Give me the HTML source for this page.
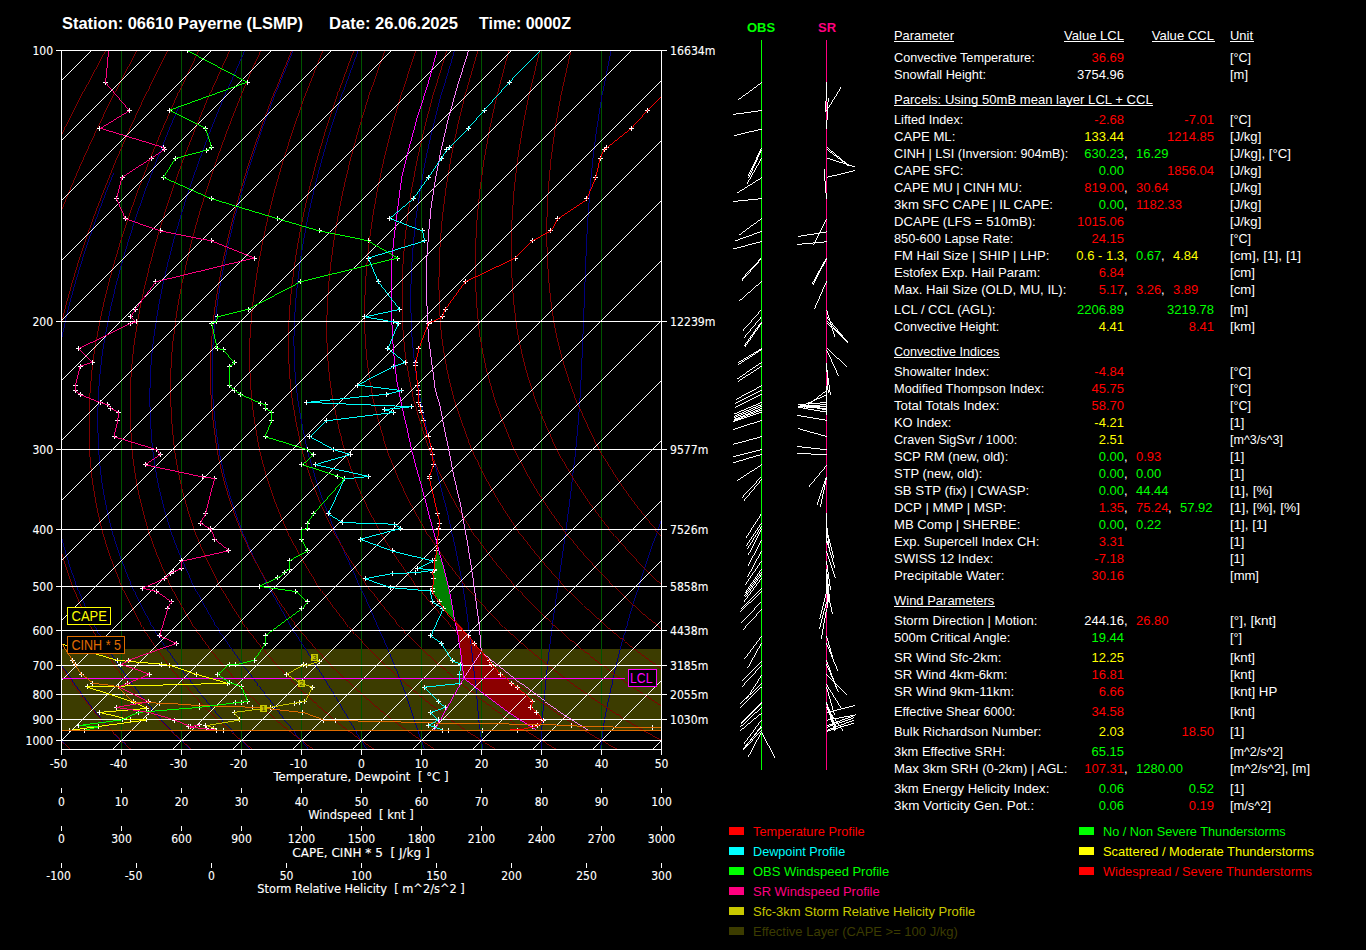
<!DOCTYPE html>
<html lang="en"><head><meta charset="utf-8"><title>Sounding 06610 Payerne</title>
<style>html,body{margin:0;padding:0;background:#000;overflow:hidden}svg{display:block}text{white-space:pre}.ce{shape-rendering:crispEdges;fill:none;stroke-width:1}</style></head><body>
<svg width="1366" height="950" viewBox="0 0 1366 950" font-family="'Liberation Sans', sans-serif" font-size="13" fill="#fff">
<rect width="1366" height="950" fill="#000"/>
<clipPath id="cp"><rect x="61" y="50" width="601" height="699"/></clipPath>
<g class="ce" clip-path="url(#cp)">
<rect x="61" y="649" width="601" height="81" style="fill:#3c3c00" stroke="none"/>
<path style="fill:#8c0000" stroke="none" d="M455.3 620.0L458.2 636.2L461.3 657.3L463.8 678.1L483.1 693.4L508.0 712.1L534.0 728.5L532.9 726.8L537.9 725.8L543.5 720.2L536.4 712.7L531.0 707.4L532.9 701.8L517.3 687.2L511.1 683.5L500.5 674.4L491.8 664.4L489.1 660.4L474.2 643.3L468.8 635.8Z"/>
<path stroke="#005400" d="M121.5 50V749M181.5 50V749M241.5 50V749M301.5 50V749M361.5 50V749M421.5 50V749M481.5 50V749M541.5 50V749M601.5 50V749"/>
<path stroke="#000081" stroke-width=".99" d="M70.6 750.0L70.3 749.6L69.9 749.3L69.5 748.9L69.2 748.5L68.8 748.1L68.4 747.8L68.1 747.4L67.7 747.0L67.4 746.7L67.0 746.3L66.6 745.9L66.3 745.5L65.9 745.1L65.5 744.8L65.2 744.4L64.8 744.0L64.4 743.6L64.1 743.2L63.7 742.8L63.3 742.5L63.0 742.1L62.6 741.7L62.2 741.3L61.9 740.9L61.5 740.5L59.7 738.5L57.8 736.5L56.0 734.5L54.1 732.5L52.3 730.4L50.4 728.3L48.5 726.1L46.7 724.0L44.8 721.8L43.0 719.5L41.2 717.2L39.4 714.8L37.6 712.4L35.8 710.0L34.0 707.5L32.2 705.0L30.5 702.4L28.7 699.8L26.9 697.2L25.1 694.5L23.3 691.8L21.5 689.1L19.7 686.3L17.9 683.5L16.0 680.6L14.2 677.7L12.4 674.7L10.6 671.7L8.8 668.6L7.1 665.5L5.3 662.3L3.5 659.0L1.8 655.7L0.0 652.3L-1.7 648.9L-3.4 645.4L-5.1 641.8L-6.8 638.1L-8.5 634.3L-10.1 630.5L-11.7 626.6L-13.3 622.5L-14.9 618.4L-16.4 614.2L-17.9 609.8L-19.4 605.4L-20.8 600.8L-22.2 596.2L-23.6 591.4L-25.0 586.5L-26.3 581.5L-27.6 576.3L-28.8 571.1L-30.0 565.6L-31.2 560.1L-32.3 554.3L-33.3 548.4L-34.3 542.3L-35.2 536.0L-35.9 529.5L-36.6 522.8L-37.3 515.8L-37.8 508.6L-38.2 501.1L-38.5 493.4L-38.6 485.3L-38.6 477.0L-38.4 468.2L-38.1 459.1L-37.4 449.5L-36.6 439.5L-35.5 429.0L-34.2 418.1L-32.6 406.6L-30.7 394.5L-28.3 381.7L-25.5 368.1L-22.2 353.6L-18.2 338.2L-13.4 321.5L-7.8 303.6L-4.1 292.2M131.1 750.0L130.7 749.6L130.3 749.3L130.0 748.9L129.6 748.5L129.2 748.1L128.8 747.8L128.4 747.4L128.1 747.0L127.7 746.7L127.3 746.3L126.9 745.9L126.5 745.5L126.1 745.1L125.7 744.8L125.4 744.4L125.0 744.0L124.6 743.6L124.2 743.2L123.8 742.8L123.4 742.5L123.0 742.1L122.7 741.7L122.3 741.3L121.9 740.9L121.5 740.5L119.6 738.5L117.6 736.5L115.6 734.5L113.7 732.5L111.7 730.4L109.7 728.3L107.7 726.1L105.7 724.0L103.7 721.8L101.8 719.5L99.8 717.2L97.8 714.8L95.9 712.4L94.0 710.0L92.0 707.5L90.1 705.0L88.1 702.4L86.2 699.8L84.2 697.2L82.2 694.5L80.3 691.8L78.3 689.1L76.3 686.3L74.3 683.5L72.2 680.6L70.2 677.7L68.2 674.7L66.2 671.7L64.2 668.6L62.2 665.5L60.3 662.3L58.3 659.0L56.3 655.7L54.3 652.3L52.4 648.9L50.4 645.4L48.5 641.8L46.5 638.1L44.6 634.3L42.8 630.5L40.9 626.6L39.1 622.5L37.3 618.4L35.5 614.2L33.7 609.8L32.0 605.4L30.2 600.8L28.6 596.2L26.9 591.4L25.3 586.5L23.7 581.5L22.1 576.3L20.5 571.1L19.0 565.6L17.6 560.1L16.1 554.3L14.8 548.4L13.5 542.3L12.3 536.0L11.2 529.5L10.2 522.8L9.2 515.8L8.3 508.6L7.5 501.1L6.9 493.4L6.4 485.3L6.0 477.0L5.8 468.2L5.8 459.1L6.0 449.5L6.4 439.5L7.1 429.0L7.9 418.1L9.1 406.6L10.5 394.5L12.4 381.7L14.7 368.1L17.5 353.6L21.0 338.2L25.2 321.5L30.3 303.6L36.1 284.4L42.9 263.6L50.9 241.2L54.4 231.7M191.2 750.0L190.8 749.6L190.4 749.3L190.0 748.9L189.6 748.5L189.3 748.1L188.9 747.8L188.5 747.4L188.1 747.0L187.7 746.7L187.3 746.3L186.9 745.9L186.6 745.5L186.2 745.1L185.8 744.8L185.4 744.4L185.0 744.0L184.6 743.6L184.2 743.2L183.8 742.8L183.5 742.5L183.1 742.1L182.7 741.7L182.3 741.3L181.9 740.9L181.5 740.5L179.5 738.5L177.5 736.5L175.5 734.5L173.5 732.5L171.5 730.4L169.4 728.3L167.4 726.1L165.3 724.0L163.3 721.8L161.2 719.5L159.2 717.2L157.1 714.8L155.1 712.4L153.0 710.0L151.0 707.5L148.9 705.0L146.9 702.4L144.8 699.8L142.7 697.2L140.6 694.5L138.4 691.8L136.3 689.1L134.1 686.3L132.0 683.5L129.8 680.6L127.6 677.7L125.4 674.7L123.3 671.7L121.1 668.6L118.9 665.5L116.7 662.3L114.5 659.0L112.3 655.7L110.2 652.3L108.0 648.9L105.8 645.4L103.7 641.8L101.5 638.1L99.4 634.3L97.2 630.5L95.1 626.6L93.0 622.5L91.0 618.4L88.9 614.2L86.9 609.8L84.9 605.4L82.9 600.8L80.9 596.2L79.0 591.4L77.1 586.5L75.2 581.5L73.3 576.3L71.5 571.1L69.6 565.6L67.9 560.1L66.1 554.3L64.5 548.4L62.8 542.3L61.3 536.0L59.8 529.5L58.4 522.8L57.1 515.8L55.9 508.6L54.7 501.1L53.7 493.4L52.8 485.3L52.0 477.0L51.4 468.2L51.0 459.1L50.8 449.5L50.8 439.5L51.0 429.0L51.4 418.1L52.1 406.6L53.1 394.5L54.4 381.7L56.2 368.1L58.5 353.6L61.5 338.2L65.1 321.5L69.6 303.6L74.8 284.4L81.0 263.6L88.3 241.2L96.9 216.8L106.9 190.1L113.8 172.8M250.5 750.0L250.2 749.6L249.8 749.3L249.5 748.9L249.1 748.5L248.8 748.1L248.4 747.8L248.1 747.4L247.7 747.0L247.3 746.7L247.0 746.3L246.6 745.9L246.3 745.5L245.9 745.1L245.5 744.8L245.2 744.4L244.8 744.0L244.4 743.6L244.1 743.2L243.7 742.8L243.3 742.5L243.0 742.1L242.6 741.7L242.2 741.3L241.9 740.9L241.5 740.5L239.6 738.5L237.8 736.5L235.8 734.5L233.9 732.5L232.0 730.4L230.0 728.3L228.0 726.1L226.0 724.0L224.0 721.8L222.0 719.5L219.9 717.2L217.9 714.8L215.9 712.4L213.8 710.0L211.8 707.5L209.7 705.0L207.6 702.4L205.5 699.8L203.4 697.2L201.2 694.5L199.0 691.8L196.8 689.1L194.6 686.3L192.3 683.5L190.1 680.6L187.8 677.7L185.5 674.7L183.2 671.7L180.9 668.6L178.6 665.5L176.2 662.3L173.9 659.0L171.6 655.7L169.2 652.3L166.8 648.9L164.5 645.4L162.1 641.8L159.8 638.1L157.4 634.3L155.1 630.5L152.7 626.6L150.4 622.5L148.1 618.4L145.8 614.2L143.5 609.8L141.3 605.4L139.0 600.8L136.8 596.2L134.5 591.4L132.3 586.5L130.1 581.5L127.9 576.3L125.8 571.1L123.7 565.6L121.5 560.1L119.5 554.3L117.5 548.4L115.5 542.3L113.6 536.0L111.8 529.5L110.0 522.8L108.3 515.8L106.7 508.6L105.2 501.1L103.7 493.4L102.4 485.3L101.2 477.0L100.2 468.2L99.3 459.1L98.7 449.5L98.2 439.5L97.9 429.0L97.9 418.1L98.0 406.6L98.5 394.5L99.3 381.7L100.6 368.1L102.3 353.6L104.7 338.2L107.8 321.5L111.6 303.6L116.2 284.4L121.7 263.6L128.3 241.2L136.1 216.8L145.4 190.1L156.5 160.7L169.7 128.1L178.9 106.7M309.1 750.0L308.8 749.6L308.5 749.3L308.2 748.9L307.9 748.5L307.6 748.1L307.3 747.8L307.0 747.4L306.7 747.0L306.4 746.7L306.1 746.3L305.8 745.9L305.5 745.5L305.2 745.1L304.9 744.8L304.6 744.4L304.3 744.0L304.0 743.6L303.7 743.2L303.4 742.8L303.1 742.5L302.8 742.1L302.4 741.7L302.1 741.3L301.8 740.9L301.5 740.5L299.9 738.5L298.3 736.5L296.7 734.5L295.0 732.5L293.3 730.4L291.6 728.3L289.9 726.1L288.1 724.0L286.3 721.8L284.5 719.5L282.7 717.2L280.9 714.8L279.1 712.4L277.2 710.0L275.4 707.5L273.5 705.0L271.5 702.4L269.6 699.8L267.6 697.2L265.6 694.5L263.5 691.8L261.4 689.1L259.3 686.3L257.1 683.5L254.9 680.6L252.7 677.7L250.4 674.7L248.2 671.7L245.9 668.6L243.6 665.5L241.2 662.3L238.9 659.0L236.5 655.7L234.1 652.3L231.6 648.9L229.2 645.4L226.7 641.8L224.3 638.1L221.8 634.3L219.3 630.5L216.8 626.6L214.3 622.5L211.8 618.4L209.3 614.2L206.8 609.8L204.3 605.4L201.8 600.8L199.4 596.2L196.9 591.4L194.4 586.5L191.9 581.5L189.4 576.3L186.9 571.1L184.5 565.6L182.0 560.1L179.6 554.3L177.3 548.4L174.9 542.3L172.6 536.0L170.4 529.5L168.3 522.8L166.2 515.8L164.1 508.6L162.2 501.1L160.3 493.4L158.5 485.3L156.8 477.0L155.3 468.2L154.0 459.1L152.8 449.5L151.8 439.5L151.0 429.0L150.4 418.1L150.0 406.6L149.9 394.5L150.1 381.7L150.8 368.1L151.9 353.6L153.6 338.2L156.0 321.5L159.1 303.6L163.0 284.4L167.7 263.6L173.5 241.2L180.5 216.8L188.9 190.1L199.1 160.7L211.4 128.1L226.3 91.6L244.4 50.5M367.0 750.0L366.8 749.6L366.6 749.3L366.4 748.9L366.2 748.5L366.0 748.1L365.7 747.8L365.5 747.4L365.3 747.0L365.1 746.7L364.9 746.3L364.6 745.9L364.4 745.5L364.2 745.1L364.0 744.8L363.8 744.4L363.5 744.0L363.3 743.6L363.1 743.2L362.9 742.8L362.6 742.5L362.4 742.1L362.2 741.7L362.0 741.3L361.7 740.9L361.5 740.5L360.3 738.5L359.2 736.5L358.0 734.5L356.7 732.5L355.5 730.4L354.2 728.3L352.9 726.1L351.6 724.0L350.2 721.8L348.9 719.5L347.5 717.2L346.2 714.8L344.8 712.4L343.4 710.0L342.0 707.5L340.5 705.0L339.0 702.4L337.5 699.8L335.9 697.2L334.3 694.5L332.7 691.8L331.0 689.1L329.2 686.3L327.5 683.5L325.6 680.6L323.8 677.7L321.9 674.7L319.9 671.7L318.0 668.6L316.0 665.5L313.9 662.3L311.9 659.0L309.7 655.7L307.6 652.3L305.4 648.9L303.1 645.4L300.8 641.8L298.5 638.1L296.2 634.3L293.8 630.5L291.4 626.6L289.0 622.5L286.5 618.4L284.0 614.2L281.5 609.8L279.0 605.4L276.4 600.8L273.8 596.2L271.2 591.4L268.6 586.5L265.9 581.5L263.2 576.3L260.5 571.1L257.8 565.6L255.1 560.1L252.4 554.3L249.7 548.4L247.0 542.3L244.4 536.0L241.7 529.5L239.2 522.8L236.6 515.8L234.1 508.6L231.7 501.1L229.3 493.4L227.0 485.3L224.8 477.0L222.7 468.2L220.8 459.1L219.0 449.5L217.4 439.5L216.0 429.0L214.7 418.1L213.6 406.6L212.8 394.5L212.3 381.7L212.2 368.1L212.5 353.6L213.4 338.2L215.0 321.5L217.3 303.6L220.3 284.4L224.1 263.6L228.9 241.2L234.9 216.8L242.3 190.1L251.3 160.7L262.4 128.1L276.0 91.6L292.8 50.5M424.8 750.0L424.6 749.6L424.5 749.3L424.4 748.9L424.3 748.5L424.1 748.1L424.0 747.8L423.9 747.4L423.7 747.0L423.6 746.7L423.5 746.3L423.4 745.9L423.2 745.5L423.1 745.1L423.0 744.8L422.8 744.4L422.7 744.0L422.6 743.6L422.4 743.2L422.3 742.8L422.2 742.5L422.0 742.1L421.9 741.7L421.8 741.3L421.6 740.9L421.5 740.5L420.8 738.5L420.1 736.5L419.4 734.5L418.7 732.5L417.9 730.4L417.2 728.3L416.4 726.1L415.7 724.0L414.9 721.8L414.1 719.5L413.3 717.2L412.5 714.8L411.8 712.4L411.0 710.0L410.1 707.5L409.3 705.0L408.5 702.4L407.6 699.8L406.7 697.2L405.8 694.5L404.8 691.8L403.8 689.1L402.8 686.3L401.7 683.5L400.6 680.6L399.4 677.7L398.3 674.7L397.1 671.7L395.8 668.6L394.6 665.5L393.3 662.3L392.0 659.0L390.6 655.7L389.2 652.3L387.7 648.9L386.2 645.4L384.6 641.8L383.0 638.1L381.4 634.3L379.7 630.5L378.0 626.6L376.2 622.5L374.4 618.4L372.5 614.2L370.6 609.8L368.6 605.4L366.6 600.8L364.5 596.2L362.3 591.4L360.1 586.5L357.8 581.5L355.4 576.3L353.0 571.1L350.5 565.6L347.9 560.1L345.3 554.3L342.6 548.4L340.0 542.3L337.2 536.0L334.5 529.5L331.7 522.8L329.0 515.8L326.2 508.6L323.3 501.1L320.5 493.4L317.8 485.3L315.1 477.0L312.4 468.2L309.9 459.1L307.5 449.5L305.1 439.5L302.9 429.0L300.9 418.1L298.9 406.6L297.2 394.5L295.8 381.7L294.7 368.1L294.1 353.6L293.9 338.2L294.4 321.5L295.5 303.6L297.3 284.4L299.9 263.6L303.4 241.2L308.0 216.8L314.0 190.1L321.5 160.7L331.0 128.1L342.9 91.6L357.9 50.5M482.8 750.0L482.7 749.6L482.7 749.3L482.6 748.9L482.6 748.5L482.5 748.1L482.5 747.8L482.4 747.4L482.4 747.0L482.3 746.7L482.3 746.3L482.2 745.9L482.2 745.5L482.1 745.1L482.1 744.8L482.0 744.4L482.0 744.0L481.9 743.6L481.9 743.2L481.8 742.8L481.8 742.5L481.7 742.1L481.7 741.7L481.6 741.3L481.6 740.9L481.5 740.5L481.2 738.5L481.0 736.5L480.7 734.5L480.4 732.5L480.2 730.4L479.9 728.3L479.6 726.1L479.3 724.0L479.1 721.8L478.8 719.5L478.6 717.2L478.4 714.8L478.1 712.4L477.9 710.0L477.7 707.5L477.5 705.0L477.3 702.4L477.1 699.8L476.8 697.2L476.6 694.5L476.3 691.8L476.0 689.1L475.7 686.3L475.4 683.5L475.1 680.6L474.8 677.7L474.5 674.7L474.1 671.7L473.8 668.6L473.4 665.5L473.1 662.3L472.7 659.0L472.3 655.7L471.9 652.3L471.5 648.9L471.0 645.4L470.6 641.8L470.1 638.1L469.6 634.3L469.1 630.5L468.6 626.6L468.1 622.5L467.6 618.4L467.0 614.2L466.4 609.8L465.8 605.4L465.1 600.8L464.4 596.2L463.7 591.4L462.9 586.5L462.0 581.5L461.1 576.3L460.1 571.1L459.0 565.6L457.9 560.1L456.7 554.3L455.5 548.4L454.1 542.3L452.7 536.0L451.3 529.5L449.7 522.8L448.1 515.8L446.3 508.6L444.4 501.1L442.4 493.4L440.4 485.3L438.2 477.0L436.0 468.2L433.8 459.1L431.5 449.5L429.2 439.5L426.8 429.0L424.3 418.1L421.9 406.6L419.6 394.5L417.3 381.7L415.3 368.1L413.5 353.6L412.1 338.2L411.2 321.5L410.8 303.6L411.0 284.4L411.9 263.6L413.5 241.2L416.2 216.8L420.1 190.1L425.4 160.7L432.6 128.1L442.0 91.6L454.3 50.5M541.3 750.0L541.3 749.6L541.3 749.3L541.3 748.9L541.3 748.5L541.3 748.1L541.3 747.8L541.3 747.4L541.4 747.0L541.4 746.7L541.4 746.3L541.4 745.9L541.4 745.5L541.4 745.1L541.4 744.8L541.4 744.4L541.4 744.0L541.4 743.6L541.4 743.2L541.4 742.8L541.4 742.5L541.5 742.1L541.5 741.7L541.5 741.3L541.5 740.9L541.5 740.5L541.6 738.5L541.6 736.5L541.7 734.5L541.7 732.5L541.8 730.4L541.9 728.3L542.0 726.1L542.1 724.0L542.2 721.8L542.3 719.5L542.5 717.2L542.7 714.8L542.9 712.4L543.1 710.0L543.3 707.5L543.6 705.0L543.8 702.4L544.1 699.8L544.3 697.2L544.6 694.5L544.9 691.8L545.1 689.1L545.4 686.3L545.6 683.5L545.9 680.6L546.2 677.7L546.5 674.7L546.8 671.7L547.1 668.6L547.5 665.5L547.8 662.3L548.2 659.0L548.6 655.7L549.0 652.3L549.4 648.9L549.8 645.4L550.2 641.8L550.7 638.1L551.2 634.3L551.7 630.5L552.2 626.6L552.7 622.5L553.3 618.4L553.9 614.2L554.5 609.8L555.2 605.4L555.8 600.8L556.5 596.2L557.2 591.4L557.9 586.5L558.7 581.5L559.4 576.3L560.2 571.1L560.9 565.6L561.7 560.1L562.5 554.3L563.3 548.4L564.2 542.3L565.0 536.0L566.0 529.5L566.9 522.8L567.8 515.8L568.8 508.6L569.7 501.1L570.7 493.4L571.6 485.3L572.6 477.0L573.6 468.2L574.7 459.1L575.7 449.5L576.7 439.5L577.7 429.0L578.6 418.1L579.4 406.6L580.2 394.5L580.9 381.7L581.6 368.1L582.2 353.6L582.8 338.2L583.5 321.5L584.2 303.6L584.9 284.4L585.7 263.6L586.6 241.2L588.0 216.8L589.9 190.1L592.7 160.7L596.8 128.1L602.6 91.6L610.9 50.5M600.4 750.0L600.4 749.6L600.4 749.3L600.5 748.9L600.5 748.5L600.6 748.1L600.6 747.8L600.7 747.4L600.7 747.0L600.7 746.7L600.8 746.3L600.8 745.9L600.9 745.5L600.9 745.1L601.0 744.8L601.0 744.4L601.1 744.0L601.1 743.6L601.2 743.2L601.2 742.8L601.2 742.5L601.3 742.1L601.3 741.7L601.4 741.3L601.4 740.9L601.5 740.5L601.8 738.5L602.0 736.5L602.3 734.5L602.6 732.5L602.9 730.4L603.2 728.3L603.5 726.1L603.8 724.0L604.2 721.8L604.6 719.5L605.0 717.2L605.4 714.8L605.9 712.4L606.4 710.0L606.9 707.5L607.4 705.0L607.9 702.4L608.5 699.8L609.1 697.2L609.6 694.5L610.2 691.8L610.8 689.1L611.4 686.3L612.0 683.5L612.6 680.6L613.3 677.7L614.0 674.7L614.7 671.7L615.4 668.6L616.1 665.5L616.9 662.3L617.7 659.0L618.5 655.7L619.4 652.3L620.3 648.9L621.2 645.4L622.2 641.8L623.2 638.1L624.2 634.3L625.3 630.5L626.4 626.6L627.6 622.5L628.8 618.4L630.0 614.2L631.3 609.8L632.7 605.4L634.1 600.8L635.6 596.2L637.1 591.4L638.7 586.5L640.3 581.5L642.0 576.3L643.7 571.1L645.5 565.6L647.3 560.1L649.3 554.3L651.3 548.4L653.4 542.3L655.6 536.0L658.0 529.5L660.4 522.8L663.0 515.8L665.6 508.6L668.4 501.1L671.3 493.4L674.3 485.3L677.5 477.0L680.9 468.2L684.5 459.1L688.4 449.5L692.5 439.5L696.7 429.0L701.2 418.1L705.9 406.6L710.9 394.5L716.3 381.7L722.0 368.1L728.2 353.6L734.9 338.2L742.2 321.5L750.1 303.6L758.7 284.4L767.8 263.6L777.7 241.2L788.3 216.8L799.7 190.1L812.0 160.7L825.3 128.1L839.5 91.6L854.8 50.5"/>
<path stroke="#810000" stroke-width=".99" d="M105.1 50.5L83.2 91.6L64.7 128.1L49.0 160.7L35.6 190.1L24.1 216.8L14.2 241.2L5.6 263.6L-1.8 284.4L-8.2 303.6L-13.8 321.5L-18.6 338.2L-22.6 353.6L-26.0 368.1L-28.8 381.7L-31.1 394.5L-33.0 406.6L-34.6 418.1L-35.9 429.0L-37.0 439.5L-37.9 449.5L-38.5 459.1L-38.9 468.2L-39.1 477.0L-39.1 485.3L-39.0 493.4L-38.7 501.1L-38.3 508.6L-37.7 515.8L-37.1 522.8L-36.4 529.5L-35.7 536.0L-34.8 542.3L-33.8 548.4L-32.8 554.3L-31.7 560.1L-30.5 565.6L-29.3 571.1L-28.1 576.3L-26.8 581.5L-25.5 586.5L-24.2 591.4L-22.8 596.2L-21.4 600.8L-19.9 605.4L-18.5 609.8L-17.0 614.2L-15.4 618.4L-13.9 622.5L-12.3 626.6L-10.7 630.5L-9.0 634.3L-7.4 638.1L-5.7 641.8L-4.0 645.4L-2.3 648.9L-0.5 652.3L1.2 655.7L3.0 659.0L4.8 662.3L6.5 665.5L8.3 668.6L10.1 671.7L11.9 674.7L13.7 677.7L15.5 680.6L17.4 683.5L19.2 686.3L21.0 689.1L22.8 691.8L24.6 694.5L26.4 697.2L28.2 699.8L30.0 702.4L31.8 705.0L33.6 707.5L35.4 710.0L37.2 712.4L39.0 714.8L40.9 717.2L42.7 719.5L44.6 721.8L46.4 724.0L48.3 726.1L50.2 728.3L52.1 730.4L54.0 732.5L55.9 734.5L57.8 736.5L59.6 738.5L61.5 740.5L63.4 742.5L65.2 744.4L67.1 746.3L69.0 748.1L70.8 750.0M136.2 50.5L115.1 91.6L97.4 128.1L82.5 160.7L69.8 190.1L59.0 216.8L49.7 241.2L41.8 263.6L34.9 284.4L29.1 303.6L24.0 321.5L19.8 338.2L16.3 353.6L13.4 368.1L11.1 381.7L9.2 394.5L7.8 406.6L6.6 418.1L5.7 429.0L5.1 439.5L4.6 449.5L4.4 459.1L4.4 468.2L4.6 477.0L4.9 485.3L5.5 493.4L6.1 501.1L6.9 508.6L7.7 515.8L8.7 522.8L9.7 529.5L10.8 536.0L12.0 542.3L13.3 548.4L14.6 554.3L16.0 560.1L17.5 565.6L19.0 571.1L20.5 576.3L22.1 581.5L23.7 586.5L25.3 591.4L27.0 596.2L28.7 600.8L30.4 605.4L32.1 609.8L33.9 614.2L35.7 618.4L37.5 622.5L39.3 626.6L41.2 630.5L43.1 634.3L45.0 638.1L46.9 641.8L48.8 645.4L50.8 648.9L52.8 652.3L54.7 655.7L56.7 659.0L58.7 662.3L60.7 665.5L62.7 668.6L64.7 671.7L66.7 674.7L68.8 677.7L70.8 680.6L72.8 683.5L74.9 686.3L76.9 689.1L78.9 691.8L80.9 694.5L82.9 697.2L84.9 699.8L86.9 702.4L88.9 705.0L90.9 707.5L92.9 710.0L94.9 712.4L96.9 714.8L98.9 717.2L100.9 719.5L103.0 721.8L105.0 724.0L107.1 726.1L109.1 728.3L111.2 730.4L113.3 732.5L115.3 734.5L117.4 736.5L119.5 738.5L121.5 740.5L123.5 742.5L125.6 744.4L127.6 746.3L129.6 748.1L131.7 750.0M167.2 50.5L147.0 91.6L130.1 128.1L115.9 160.7L104.0 190.1L93.8 216.8L85.2 241.2L77.9 263.6L71.7 284.4L66.4 303.6L61.9 321.5L58.1 338.2L55.2 353.6L52.8 368.1L51.0 381.7L49.6 394.5L48.6 406.6L47.9 418.1L47.4 429.0L47.2 439.5L47.1 449.5L47.3 459.1L47.7 468.2L48.3 477.0L49.0 485.3L49.9 493.4L50.9 501.1L52.0 508.6L53.2 515.8L54.5 522.8L55.9 529.5L57.3 536.0L58.8 542.3L60.4 548.4L62.1 554.3L63.8 560.1L65.5 565.6L67.3 571.1L69.2 576.3L71.0 581.5L72.9 586.5L74.8 591.4L76.7 596.2L78.7 600.8L80.7 605.4L82.7 609.8L84.7 614.2L86.7 618.4L88.8 622.5L90.9 626.6L93.0 630.5L95.1 634.3L97.3 638.1L99.4 641.8L101.6 645.4L103.8 648.9L106.0 652.3L108.2 655.7L110.4 659.0L112.7 662.3L114.9 665.5L117.1 668.6L119.3 671.7L121.6 674.7L123.8 677.7L126.1 680.6L128.3 683.5L130.5 686.3L132.8 689.1L135.0 691.8L137.2 694.5L139.4 697.2L141.6 699.8L143.8 702.4L146.0 705.0L148.2 707.5L150.4 710.0L152.5 712.4L154.7 714.8L156.9 717.2L159.1 719.5L161.4 721.8L163.6 724.0L165.9 726.1L168.1 728.3L170.3 730.4L172.6 732.5L174.8 734.5L177.1 736.5L179.3 738.5L181.5 740.5L183.7 742.5L185.9 744.4L188.1 746.3L190.3 748.1L192.5 750.0M198.3 50.5L178.8 91.6L162.8 128.1L149.4 160.7L138.1 190.1L128.7 216.8L120.7 241.2L114.0 263.6L108.4 284.4L103.7 303.6L99.7 321.5L96.5 338.2L94.1 353.6L92.2 368.1L90.9 381.7L89.9 394.5L89.4 406.6L89.1 418.1L89.1 429.0L89.3 439.5L89.6 449.5L90.2 459.1L91.0 468.2L91.9 477.0L93.1 485.3L94.3 493.4L95.7 501.1L97.1 508.6L98.7 515.8L100.3 522.8L102.0 529.5L103.8 536.0L105.6 542.3L107.5 548.4L109.5 554.3L111.5 560.1L113.6 565.6L115.7 571.1L117.8 576.3L119.9 581.5L122.1 586.5L124.3 591.4L126.5 596.2L128.7 600.8L131.0 605.4L133.2 609.8L135.5 614.2L137.8 618.4L140.1 622.5L142.5 626.6L144.8 630.5L147.2 634.3L149.6 638.1L152.0 641.8L154.4 645.4L156.9 648.9L159.3 652.3L161.7 655.7L164.2 659.0L166.6 662.3L169.1 665.5L171.5 668.6L173.9 671.7L176.4 674.7L178.9 677.7L181.3 680.6L183.8 683.5L186.2 686.3L188.6 689.1L191.1 691.8L193.5 694.5L195.9 697.2L198.3 699.8L200.7 702.4L203.1 705.0L205.4 707.5L207.8 710.0L210.2 712.4L212.6 714.8L215.0 717.2L217.4 719.5L219.8 721.8L222.2 724.0L224.6 726.1L227.0 728.3L229.5 730.4L231.9 732.5L234.3 734.5L236.7 736.5L239.1 738.5L241.5 740.5L243.9 742.5L246.3 744.4L248.6 746.3L251.0 748.1L253.4 750.0M229.3 50.5L210.7 91.6L195.5 128.1L182.8 160.7L172.3 190.1L163.6 216.8L156.2 241.2L150.2 263.6L145.1 284.4L140.9 303.6L137.6 321.5L134.9 338.2L133.0 353.6L131.6 368.1L130.7 381.7L130.3 394.5L130.2 406.6L130.3 418.1L130.8 429.0L131.4 439.5L132.1 449.5L133.1 459.1L134.3 468.2L135.6 477.0L137.1 485.3L138.7 493.4L140.5 501.1L142.3 508.6L144.2 515.8L146.2 522.8L148.2 529.5L150.3 536.0L152.4 542.3L154.7 548.4L156.9 554.3L159.3 560.1L161.6 565.6L164.0 571.1L166.4 576.3L168.9 581.5L171.3 586.5L173.8 591.4L176.2 596.2L178.7 600.8L181.3 605.4L183.8 609.8L186.3 614.2L188.9 618.4L191.5 622.5L194.1 626.6L196.7 630.5L199.3 634.3L201.9 638.1L204.6 641.8L207.2 645.4L209.9 648.9L212.6 652.3L215.2 655.7L217.9 659.0L220.6 662.3L223.2 665.5L225.9 668.6L228.6 671.7L231.2 674.7L233.9 677.7L236.6 680.6L239.2 683.5L241.9 686.3L244.5 689.1L247.2 691.8L249.8 694.5L252.4 697.2L255.0 699.8L257.6 702.4L260.1 705.0L262.7 707.5L265.3 710.0L267.8 712.4L270.4 714.8L273.0 717.2L275.6 719.5L278.2 721.8L280.8 724.0L283.4 726.1L286.0 728.3L288.6 730.4L291.2 732.5L293.8 734.5L296.4 736.5L298.9 738.5L301.5 740.5L304.1 742.5L306.6 744.4L309.1 746.3L311.7 748.1L314.2 750.0M260.3 50.5L242.6 91.6L228.2 128.1L216.3 160.7L206.5 190.1L198.4 216.8L191.7 241.2L186.3 263.6L181.8 284.4L178.2 303.6L175.4 321.5L173.3 338.2L171.9 353.6L171.0 368.1L170.6 381.7L170.6 394.5L171.0 406.6L171.6 418.1L172.4 429.0L173.5 439.5L174.7 449.5L176.0 459.1L177.6 468.2L179.3 477.0L181.2 485.3L183.2 493.4L185.2 501.1L187.4 508.6L189.7 515.8L192.0 522.8L194.3 529.5L196.7 536.0L199.2 542.3L201.8 548.4L204.4 554.3L207.0 560.1L209.7 565.6L212.3 571.1L215.0 576.3L217.8 581.5L220.5 586.5L223.2 591.4L226.0 596.2L228.8 600.8L231.6 605.4L234.4 609.8L237.2 614.2L240.0 618.4L242.8 622.5L245.7 626.6L248.5 630.5L251.4 634.3L254.3 638.1L257.1 641.8L260.0 645.4L262.9 648.9L265.8 652.3L268.7 655.7L271.6 659.0L274.5 662.3L277.4 665.5L280.3 668.6L283.2 671.7L286.1 674.7L288.9 677.7L291.8 680.6L294.7 683.5L297.6 686.3L300.4 689.1L303.2 691.8L306.1 694.5L308.9 697.2L311.7 699.8L314.5 702.4L317.2 705.0L320.0 707.5L322.7 710.0L325.5 712.4L328.3 714.8L331.0 717.2L333.8 719.5L336.6 721.8L339.4 724.0L342.2 726.1L344.9 728.3L347.7 730.4L350.5 732.5L353.3 734.5L356.0 736.5L358.8 738.5L361.5 740.5L364.2 742.5L366.9 744.4L369.7 746.3L372.4 748.1L375.1 750.0M291.4 50.5L274.5 91.6L260.9 128.1L249.7 160.7L240.7 190.1L233.3 216.8L227.3 241.2L222.4 263.6L218.6 284.4L215.5 303.6L213.2 321.5L211.7 338.2L210.7 353.6L210.4 368.1L210.5 381.7L211.0 394.5L211.8 406.6L212.8 418.1L214.1 429.0L215.6 439.5L217.2 449.5L218.9 459.1L220.9 468.2L223.0 477.0L225.2 485.3L227.6 493.4L230.0 501.1L232.6 508.6L235.1 515.8L237.8 522.8L240.5 529.5L243.2 536.0L246.0 542.3L248.9 548.4L251.8 554.3L254.7 560.1L257.7 565.6L260.7 571.1L263.7 576.3L266.7 581.5L269.7 586.5L272.7 591.4L275.8 596.2L278.8 600.8L281.9 605.4L284.9 609.8L288.0 614.2L291.1 618.4L294.2 622.5L297.2 626.6L300.4 630.5L303.5 634.3L306.6 638.1L309.7 641.8L312.8 645.4L316.0 648.9L319.1 652.3L322.2 655.7L325.4 659.0L328.5 662.3L331.6 665.5L334.7 668.6L337.8 671.7L340.9 674.7L344.0 677.7L347.1 680.6L350.2 683.5L353.2 686.3L356.3 689.1L359.3 691.8L362.4 694.5L365.4 697.2L368.4 699.8L371.3 702.4L374.3 705.0L377.3 707.5L380.2 710.0L383.2 712.4L386.1 714.8L389.1 717.2L392.0 719.5L395.0 721.8L397.9 724.0L400.9 726.1L403.9 728.3L406.8 730.4L409.8 732.5L412.7 734.5L415.7 736.5L418.6 738.5L421.5 740.5L424.4 742.5L427.3 744.4L430.2 746.3L433.0 748.1L435.9 750.0M322.4 50.5L306.4 91.6L293.6 128.1L283.2 160.7L274.8 190.1L268.1 216.8L262.8 241.2L258.5 263.6L255.3 284.4L252.8 303.6L251.1 321.5L250.0 338.2L249.6 353.6L249.8 368.1L250.4 381.7L251.3 394.5L252.6 406.6L254.1 418.1L255.8 429.0L257.7 439.5L259.7 449.5L261.8 459.1L264.2 468.2L266.7 477.0L269.3 485.3L272.0 493.4L274.8 501.1L277.7 508.6L280.6 515.8L283.6 522.8L286.6 529.5L289.7 536.0L292.8 542.3L296.0 548.4L299.2 554.3L302.5 560.1L305.7 565.6L309.0 571.1L312.3 576.3L315.6 581.5L318.9 586.5L322.2 591.4L325.5 596.2L328.8 600.8L332.1 605.4L335.5 609.8L338.8 614.2L342.1 618.4L345.5 622.5L348.8 626.6L352.2 630.5L355.5 634.3L358.9 638.1L362.3 641.8L365.6 645.4L369.0 648.9L372.4 652.3L375.7 655.7L379.1 659.0L382.4 662.3L385.8 665.5L389.1 668.6L392.4 671.7L395.7 674.7L399.0 677.7L402.3 680.6L405.6 683.5L408.9 686.3L412.2 689.1L415.4 691.8L418.6 694.5L421.9 697.2L425.0 699.8L428.2 702.4L431.4 705.0L434.5 707.5L437.7 710.0L440.8 712.4L444.0 714.8L447.1 717.2L450.2 719.5L453.4 721.8L456.5 724.0L459.7 726.1L462.8 728.3L466.0 730.4L469.1 732.5L472.2 734.5L475.3 736.5L478.4 738.5L481.5 740.5L484.6 742.5L487.6 744.4L490.7 746.3L493.7 748.1L496.7 750.0M353.4 50.5L338.3 91.6L326.3 128.1L316.7 160.7L309.0 190.1L303.0 216.8L298.3 241.2L294.7 263.6L292.0 284.4L290.1 303.6L288.9 321.5L288.4 338.2L288.5 353.6L289.2 368.1L290.2 381.7L291.7 394.5L293.4 406.6L295.3 418.1L297.5 429.0L299.7 439.5L302.2 449.5L304.7 459.1L307.5 468.2L310.3 477.0L313.3 485.3L316.4 493.4L319.6 501.1L322.8 508.6L326.1 515.8L329.4 522.8L332.8 529.5L336.2 536.0L339.6 542.3L343.1 548.4L346.7 554.3L350.2 560.1L353.8 565.6L357.3 571.1L360.9 576.3L364.5 581.5L368.1 586.5L371.7 591.4L375.3 596.2L378.9 600.8L382.4 605.4L386.0 609.8L389.6 614.2L393.2 618.4L396.8 622.5L400.4 626.6L404.0 630.5L407.6 634.3L411.2 638.1L414.8 641.8L418.4 645.4L422.1 648.9L425.6 652.3L429.2 655.7L432.8 659.0L436.4 662.3L439.9 665.5L443.5 668.6L447.0 671.7L450.6 674.7L454.1 677.7L457.6 680.6L461.1 683.5L464.6 686.3L468.0 689.1L471.5 691.8L474.9 694.5L478.3 697.2L481.7 699.8L485.1 702.4L488.5 705.0L491.8 707.5L495.1 710.0L498.5 712.4L501.8 714.8L505.1 717.2L508.5 719.5L511.8 721.8L515.1 724.0L518.4 726.1L521.8 728.3L525.1 730.4L528.4 732.5L531.7 734.5L535.0 736.5L538.3 738.5L541.5 740.5L544.7 742.5L548.0 744.4L551.2 746.3L554.4 748.1L557.6 750.0M384.5 50.5L370.2 91.6L359.0 128.1L350.1 160.7L343.2 190.1L337.8 216.8L333.8 241.2L330.8 263.6L328.7 284.4L327.4 303.6L326.8 321.5L326.8 338.2L327.4 353.6L328.6 368.1L330.1 381.7L332.0 394.5L334.2 406.6L336.6 418.1L339.1 429.0L341.8 439.5L344.7 449.5L347.6 459.1L350.8 468.2L354.0 477.0L357.4 485.3L360.9 493.4L364.4 501.1L368.0 508.6L371.6 515.8L375.3 522.8L379.0 529.5L382.7 536.0L386.4 542.3L390.3 548.4L394.1 554.3L397.9 560.1L401.8 565.6L405.7 571.1L409.6 576.3L413.4 581.5L417.3 586.5L421.2 591.4L425.0 596.2L428.9 600.8L432.7 605.4L436.6 609.8L440.5 614.2L444.3 618.4L448.2 622.5L452.0 626.6L455.9 630.5L459.7 634.3L463.6 638.1L467.4 641.8L471.3 645.4L475.1 648.9L478.9 652.3L482.7 655.7L486.5 659.0L490.3 662.3L494.1 665.5L497.9 668.6L501.6 671.7L505.4 674.7L509.1 677.7L512.8 680.6L516.6 683.5L520.3 686.3L523.9 689.1L527.6 691.8L531.2 694.5L534.8 697.2L538.4 699.8L542.0 702.4L545.5 705.0L549.1 707.5L552.6 710.0L556.1 712.4L559.6 714.8L563.2 717.2L566.7 719.5L570.2 721.8L573.7 724.0L577.2 726.1L580.7 728.3L584.2 730.4L587.7 732.5L591.2 734.5L594.6 736.5L598.1 738.5L601.5 740.5L604.9 742.5L608.3 744.4L611.7 746.3L615.1 748.1L618.4 750.0M415.5 50.5L402.1 91.6L391.7 128.1L383.6 160.7L377.4 190.1L372.7 216.8L369.3 241.2L366.9 263.6L365.4 284.4L364.7 303.6L364.6 321.5L365.2 338.2L366.3 353.6L368.0 368.1L370.0 381.7L372.3 394.5L375.0 406.6L377.8 418.1L380.8 429.0L383.9 439.5L387.2 449.5L390.6 459.1L394.1 468.2L397.7 477.0L401.5 485.3L405.3 493.4L409.2 501.1L413.1 508.6L417.1 515.8L421.1 522.8L425.1 529.5L429.2 536.0L433.3 542.3L437.4 548.4L441.5 554.3L445.7 560.1L449.8 565.6L454.0 571.1L458.2 576.3L462.4 581.5L466.5 586.5L470.6 591.4L474.8 596.2L478.9 600.8L483.0 605.4L487.2 609.8L491.3 614.2L495.4 618.4L499.5 622.5L503.6 626.6L507.7 630.5L511.8 634.3L515.9 638.1L520.0 641.8L524.1 645.4L528.1 648.9L532.2 652.3L536.2 655.7L540.3 659.0L544.3 662.3L548.3 665.5L552.3 668.6L556.2 671.7L560.2 674.7L564.2 677.7L568.1 680.6L572.0 683.5L575.9 686.3L579.8 689.1L583.7 691.8L587.5 694.5L591.3 697.2L595.1 699.8L598.9 702.4L602.6 705.0L606.3 707.5L610.1 710.0L613.8 712.4L617.5 714.8L621.2 717.2L624.9 719.5L628.6 721.8L632.3 724.0L636.0 726.1L639.7 728.3L643.3 730.4L647.0 732.5L650.7 734.5L654.3 736.5L657.9 738.5L661.5 740.5L665.1 742.5L668.6 744.4L672.2 746.3L675.7 748.1L679.3 750.0M446.5 50.5L434.0 91.6L424.4 128.1L417.0 160.7L411.5 190.1L407.5 216.8L404.8 241.2L403.0 263.6L402.2 284.4L402.0 303.6L402.5 321.5L403.6 338.2L405.2 353.6L407.4 368.1L409.9 381.7L412.7 394.5L415.8 406.6L419.0 418.1L422.5 429.0L426.0 439.5L429.7 449.5L433.5 459.1L437.4 468.2L441.4 477.0L445.5 485.3L449.7 493.4L453.9 501.1L458.2 508.6L462.6 515.8L466.9 522.8L471.3 529.5L475.6 536.0L480.1 542.3L484.5 548.4L489.0 554.3L493.4 560.1L497.9 565.6L502.4 571.1L506.8 576.3L511.3 581.5L515.7 586.5L520.1 591.4L524.5 596.2L528.9 600.8L533.3 605.4L537.7 609.8L542.1 614.2L546.5 618.4L550.8 622.5L555.2 626.6L559.5 630.5L563.9 634.3L568.2 638.1L572.5 641.8L576.9 645.4L581.2 648.9L585.5 652.3L589.7 655.7L594.0 659.0L598.2 662.3L602.5 665.5L606.7 668.6L610.9 671.7L615.0 674.7L619.2 677.7L623.4 680.6L627.5 683.5L631.6 686.3L635.7 689.1L639.8 691.8L643.8 694.5L647.8 697.2L651.8 699.8L655.8 702.4L659.7 705.0L663.6 707.5L667.5 710.0L671.4 712.4L675.3 714.8L679.2 717.2L683.1 719.5L687.0 721.8L690.9 724.0L694.7 726.1L698.6 728.3L702.5 730.4L706.3 732.5L710.1 734.5L713.9 736.5L717.7 738.5L721.5 740.5L725.3 742.5L729.0 744.4L732.7 746.3L736.4 748.1L740.1 750.0M477.6 50.5L465.9 91.6L457.1 128.1L450.5 160.7L445.7 190.1L442.4 216.8L440.3 241.2L439.2 263.6L438.9 284.4L439.3 303.6L440.3 321.5L441.9 338.2L444.1 353.6L446.7 368.1L449.7 381.7L453.0 394.5L456.6 406.6L460.3 418.1L464.2 429.0L468.1 439.5L472.2 449.5L476.4 459.1L480.7 468.2L485.1 477.0L489.6 485.3L494.1 493.4L498.7 501.1L503.4 508.6L508.0 515.8L512.7 522.8L517.4 529.5L522.1 536.0L526.9 542.3L531.6 548.4L536.4 554.3L541.2 560.1L545.9 565.6L550.7 571.1L555.4 576.3L560.2 581.5L564.9 586.5L569.6 591.4L574.3 596.2L579.0 600.8L583.6 605.4L588.3 609.8L592.9 614.2L597.5 618.4L602.2 622.5L606.8 626.6L611.4 630.5L616.0 634.3L620.5 638.1L625.1 641.8L629.7 645.4L634.2 648.9L638.7 652.3L643.2 655.7L647.7 659.0L652.2 662.3L656.6 665.5L661.1 668.6L665.5 671.7L669.9 674.7L674.3 677.7L678.6 680.6L683.0 683.5L687.3 686.3L691.6 689.1L695.8 691.8L700.1 694.5L704.3 697.2L708.5 699.8L712.6 702.4L716.8 705.0L720.9 707.5L725.0 710.0L729.1 712.4L733.2 714.8L737.2 717.2L741.3 719.5L745.4 721.8L749.5 724.0L753.5 726.1L757.6 728.3L761.6 730.4L765.6 732.5L769.6 734.5L773.6 736.5L777.6 738.5L781.5 740.5L785.4 742.5L789.3 744.4L793.2 746.3L797.1 748.1L801.0 750.0M508.6 50.5L497.8 91.6L489.8 128.1L483.9 160.7L479.9 190.1L477.2 216.8L475.8 241.2L475.3 263.6L475.6 284.4L476.6 303.6L478.2 321.5L480.3 338.2L483.0 353.6L486.1 368.1L489.6 381.7L493.4 394.5L497.4 406.6L501.5 418.1L505.8 429.0L510.2 439.5L514.7 449.5L519.3 459.1L524.0 468.2L528.8 477.0L533.6 485.3L538.5 493.4L543.5 501.1L548.5 508.6L553.5 515.8L558.5 522.8L563.6 529.5L568.6 536.0L573.7 542.3L578.7 548.4L583.8 554.3L588.9 560.1L594.0 565.6L599.0 571.1L604.1 576.3L609.1 581.5L614.1 586.5L619.1 591.4L624.0 596.2L629.0 600.8L633.9 605.4L638.8 609.8L643.7 614.2L648.6 618.4L653.5 622.5L658.4 626.6L663.2 630.5L668.0 634.3L672.9 638.1L677.7 641.8L682.5 645.4L687.2 648.9L692.0 652.3L696.7 655.7L701.4 659.0L706.1 662.3L710.8 665.5L715.5 668.6L720.1 671.7L724.7 674.7L729.3 677.7L733.9 680.6L738.4 683.5L742.9 686.3L747.4 689.1L751.9 691.8L756.4 694.5L760.8 697.2L765.2 699.8L769.5 702.4L773.9 705.0L778.2 707.5L782.5 710.0L786.7 712.4L791.0 714.8L795.3 717.2L799.5 719.5L803.8 721.8L808.0 724.0L812.3 726.1L816.5 728.3L820.7 730.4L824.9 732.5L829.1 734.5L833.3 736.5L837.4 738.5L841.5 740.5L845.6 742.5L849.7 744.4L853.7 746.3L857.8 748.1L861.8 750.0M539.6 50.5L529.7 91.6L522.5 128.1L517.4 160.7L514.1 190.1L512.1 216.8L511.3 241.2L511.4 263.6L512.3 284.4L513.9 303.6L516.0 321.5L518.7 338.2L521.9 353.6L525.5 368.1L529.5 381.7L533.7 394.5L538.2 406.6L542.8 418.1L547.5 429.0L552.3 439.5L557.2 449.5L562.2 459.1L567.3 468.2L572.4 477.0L577.7 485.3L583.0 493.4L588.3 501.1L593.6 508.6L599.0 515.8L604.4 522.8L609.7 529.5L615.1 536.0L620.5 542.3L625.9 548.4L631.2 554.3L636.6 560.1L642.0 565.6L647.4 571.1L652.7 576.3L658.0 581.5L663.3 586.5L668.6 591.4L673.8 596.2L679.0 600.8L684.2 605.4L689.4 609.8L694.6 614.2L699.7 618.4L704.8 622.5L709.9 626.6L715.0 630.5L720.1 634.3L725.2 638.1L730.2 641.8L735.3 645.4L740.3 648.9L745.3 652.3L750.2 655.7L755.2 659.0L760.1 662.3L765.0 665.5L769.9 668.6L774.7 671.7L779.5 674.7L784.3 677.7L789.1 680.6L793.9 683.5L798.6 686.3L803.3 689.1L808.0 691.8L812.7 694.5L817.3 697.2L821.8 699.8L826.4 702.4L830.9 705.0L835.4 707.5L839.9 710.0L844.4 712.4L848.9 714.8L853.3 717.2L857.8 719.5L862.2 721.8L866.6 724.0L871.0 726.1L875.5 728.3L879.8 730.4L884.2 732.5L888.6 734.5L892.9 736.5L897.2 738.5L901.5 740.5L905.8 742.5L910.0 744.4L914.2 746.3L918.5 748.1L922.6 750.0M570.7 50.5L561.6 91.6L555.2 128.1L550.8 160.7L548.2 190.1L547.0 216.8L546.8 241.2L547.6 263.6L549.1 284.4L551.2 303.6L553.9 321.5L557.1 338.2L560.8 353.6L564.9 368.1L569.4 381.7L574.1 394.5L579.0 406.6L584.0 418.1L589.2 429.0L594.4 439.5L599.7 449.5L605.1 459.1L610.6 468.2L616.1 477.0L621.7 485.3L627.4 493.4L633.1 501.1L638.8 508.6L644.5 515.8L650.2 522.8L655.9 529.5L661.6 536.0L667.3 542.3L673.0 548.4L678.7 554.3L684.4 560.1L690.0 565.6L695.7 571.1L701.3 576.3L706.9 581.5L712.5 586.5L718.0 591.4L723.6 596.2L729.1 600.8L734.5 605.4L740.0 609.8L745.4 614.2L750.8 618.4L756.2 622.5L761.5 626.6L766.9 630.5L772.2 634.3L777.5 638.1L782.8 641.8L788.1 645.4L793.3 648.9L798.5 652.3L803.7 655.7L808.9 659.0L814.0 662.3L819.2 665.5L824.2 668.6L829.3 671.7L834.4 674.7L839.4 677.7L844.4 680.6L849.4 683.5L854.3 686.3L859.2 689.1L864.1 691.8L868.9 694.5L873.8 697.2L878.5 699.8L883.3 702.4L888.0 705.0L892.7 707.5L897.4 710.0L902.1 712.4L906.7 714.8L911.3 717.2L916.0 719.5L920.6 721.8L925.2 724.0L929.8 726.1L934.4 728.3L939.0 730.4L943.5 732.5L948.1 734.5L952.6 736.5L957.0 738.5L961.5 740.5L965.9 742.5L970.4 744.4L974.8 746.3L979.1 748.1L983.5 750.0"/>
<path stroke="#fff" stroke-linecap="square" d="M61.5 80.5L91.5 50.5M61.5 140.5L151.5 50.5M61.5 200.5L211.5 50.5M61.5 260.5L271.5 50.5M61.5 320.5L331.5 50.5M61.5 380.5L391.5 50.5M61.5 440.5L451.5 50.5M61.5 500.5L511.5 50.5M61.5 560.5L571.5 50.5M61.5 620.5L631.5 50.5M61.5 680.5L661.5 80.5M61.5 740.5L661.5 140.5M113.5 748.5L661.5 200.5M173.5 748.5L661.5 260.5M233.5 748.5L661.5 320.5M293.5 748.5L661.5 380.5M353.5 748.5L661.5 440.5M413.5 748.5L661.5 500.5M473.5 748.5L661.5 560.5M533.5 748.5L661.5 620.5M593.5 748.5L661.5 680.5M653.5 748.5L661.5 740.5"/>
<path stroke="#fff" d="M61 50.5H662M61 321.5H662M61 449.5H662M61 529.5H662M61 586.5H662M61 630.5H662M61 665.5H662M61 694.5H662M61 719.5H662M61 740.5H662"/>
</g>
<g class="ce" clip-path="url(#cp)">
<path style="fill:#008000" stroke="none" d="M437.5 549.5L444.4 570.2L449.4 590.2L453.6 613.5L454.5 619.5L443.3 608.5L439.4 601.9L432.7 591.5L432.7 588.5L433.6 578.8L432.7 572.7L434.4 569.6L434.4 561.0L436.9 551.0Z"/>
<path stroke="#f0f" d="M61 678.5H625"/>
<path stroke="#fff" d="M645 110.5h5M647.5 108v5M629 128.5h5M631.5 126v5M604 147.5h5M606.5 145v5M602 149.5h5M604.5 147v5M598 158.5h5M600.5 156v5M593 177.5h5M595.5 175v5M584 198.5h5M586.5 196v5M555 218.5h5M557.5 216v5M548 230.5h5M550.5 228v5M530 240.5h5M532.5 238v5M513 258.5h5M515.5 256v5M463 281.5h5M465.5 279v5M443 309.5h5M445.5 307v5M440 316.5h5M442.5 314v5M429 321.5h5M431.5 319v5M426 323.5h5M428.5 321v5M416 348.5h5M418.5 346v5M413 362.5h5M415.5 360v5M413 365.5h5M415.5 363v5M415 385.5h5M417.5 383v5M416 390.5h5M418.5 388v5M416 394.5h5M418.5 392v5M416 402.5h5M418.5 400v5M418 406.5h5M420.5 404v5M418 410.5h5M420.5 408v5M419 412.5h5M421.5 410v5M421 420.5h5M423.5 418v5M426 436.5h5M428.5 434v5M429 448.5h5M431.5 446v5M430 454.5h5M432.5 452v5M431 464.5h5M433.5 462v5M427 476.5h5M429.5 474v5M427 478.5h5M429.5 476v5M435 513.5h5M437.5 511v5M437 523.5h5M439.5 521v5M436 528.5h5M438.5 526v5M435 539.5h5M437.5 537v5M434 550.5h5M436.5 548v5M432 560.5h5M434.5 558v5M432 569.5h5M434.5 567v5M430 572.5h5M432.5 570v5M431 578.5h5M433.5 576v5M430 588.5h5M432.5 586v5M430 591.5h5M432.5 589v5M437 601.5h5M439.5 599v5M441 608.5h5M443.5 606v5M466 635.5h5M468.5 633v5M472 643.5h5M474.5 641v5M487 660.5h5M489.5 658v5M489 664.5h5M491.5 662v5M498 674.5h5M500.5 672v5M509 683.5h5M511.5 681v5M515 687.5h5M517.5 685v5M530 701.5h5M532.5 699v5M528 707.5h5M530.5 705v5M534 712.5h5M536.5 710v5M541 720.5h5M543.5 718v5M535 725.5h5M537.5 723v5M530 726.5h5M532.5 724v5M507 82.5h5M509.5 80v5M482 110.5h5M484.5 108v5M466 128.5h5M468.5 126v5M447 147.5h5M449.5 145v5M444 149.5h5M446.5 147v5M439 158.5h5M441.5 156v5M426 177.5h5M428.5 175v5M411 198.5h5M413.5 196v5M387 218.5h5M389.5 216v5M420 230.5h5M422.5 228v5M422 240.5h5M424.5 238v5M366 258.5h5M368.5 256v5M376 281.5h5M378.5 279v5M397 309.5h5M399.5 307v5M362 316.5h5M364.5 314v5M391 321.5h5M393.5 319v5M396 323.5h5M398.5 321v5M385 348.5h5M387.5 346v5M403 362.5h5M405.5 360v5M391 366.5h5M393.5 364v5M355 385.5h5M357.5 383v5M399 390.5h5M401.5 388v5M384 394.5h5M386.5 392v5M304 402.5h5M306.5 400v5M409 406.5h5M411.5 404v5M382 409.5h5M384.5 407v5M391 412.5h5M393.5 410v5M324 420.5h5M326.5 418v5M307 436.5h5M309.5 434v5M331 449.5h5M333.5 447v5M348 454.5h5M350.5 452v5M313 464.5h5M315.5 462v5M366 476.5h5M368.5 474v5M342 478.5h5M344.5 476v5M326 513.5h5M328.5 511v5M340 522.5h5M342.5 520v5M392 524.5h5M394.5 522v5M398 528.5h5M400.5 526v5M358 539.5h5M360.5 537v5M390 550.5h5M392.5 548v5M430 560.5h5M432.5 558v5M415 568.5h5M417.5 566v5M432 570.5h5M434.5 568v5M413 572.5h5M415.5 570v5M390 573.5h5M392.5 571v5M363 578.5h5M365.5 576v5M388 587.5h5M390.5 585v5M428 590.5h5M430.5 588v5M430 601.5h5M432.5 599v5M440 608.5h5M442.5 606v5M428 635.5h5M430.5 633v5M439 643.5h5M441.5 641v5M450 660.5h5M452.5 658v5M458 664.5h5M460.5 662v5M457 674.5h5M459.5 672v5M457 683.5h5M459.5 681v5M422 687.5h5M424.5 685v5M436 701.5h5M438.5 699v5M443 707.5h5M445.5 705v5M428 712.5h5M430.5 710v5M436 719.5h5M438.5 717v5M426 725.5h5M428.5 723v5M432 726.5h5M434.5 724v5M440 730.5h5M442.5 728v5M446 730.5h5M448.5 728v5M185 50.5h5M187.5 48v5M245 82.5h5M247.5 80v5M167 110.5h5M169.5 108v5M203 128.5h5M205.5 126v5M209 147.5h5M211.5 145v5M204 150.5h5M206.5 148v5M173 158.5h5M175.5 156v5M161 177.5h5M163.5 175v5M209 198.5h5M211.5 196v5M275 218.5h5M277.5 216v5M317 230.5h5M319.5 228v5M366 240.5h5M368.5 238v5M395 258.5h5M397.5 256v5M298 281.5h5M300.5 279v5M246 309.5h5M248.5 307v5M215 316.5h5M217.5 314v5M214 321.5h5M216.5 319v5M209 323.5h5M211.5 321v5M215 348.5h5M217.5 346v5M221 349.5h5M223.5 347v5M232 362.5h5M234.5 360v5M227 366.5h5M229.5 364v5M227 385.5h5M229.5 383v5M232 390.5h5M234.5 388v5M238 394.5h5M240.5 392v5M258 403.5h5M260.5 401v5M263 404.5h5M265.5 402v5M263 408.5h5M265.5 406v5M269 412.5h5M271.5 410v5M269 420.5h5M271.5 418v5M263 436.5h5M265.5 434v5M305 449.5h5M307.5 447v5M311 454.5h5M313.5 452v5M299 464.5h5M301.5 462v5M335 476.5h5M337.5 474v5M342 478.5h5M344.5 476v5M311 513.5h5M313.5 511v5M305 523.5h5M307.5 521v5M305 528.5h5M307.5 526v5M299 529.5h5M301.5 527v5M299 539.5h5M301.5 537v5M305 550.5h5M307.5 548v5M287 560.5h5M289.5 558v5M287 569.5h5M289.5 567v5M282 572.5h5M284.5 570v5M275 577.5h5M277.5 575v5M257 586.5h5M259.5 584v5M293 591.5h5M295.5 589v5M305 601.5h5M307.5 599v5M299 608.5h5M301.5 606v5M263 635.5h5M265.5 633v5M263 643.5h5M265.5 641v5M252 660.5h5M254.5 658v5M233 664.5h5M235.5 662v5M227 664.5h5M229.5 662v5M215 674.5h5M217.5 672v5M227 682.5h5M229.5 680v5M239 686.5h5M241.5 684v5M245 701.5h5M247.5 699v5M239 702.5h5M241.5 700v5M233 702.5h5M235.5 700v5M197 707.5h5M199.5 705v5M136 712.5h5M138.5 710v5M120 719.5h5M122.5 717v5M76 725.5h5M78.5 723v5M96 726.5h5M98.5 724v5M82 730.5h5M84.5 728v5M103 82.5h5M105.5 80v5M127 110.5h5M129.5 108v5M97 128.5h5M99.5 126v5M161 147.5h5M163.5 145v5M162 149.5h5M164.5 147v5M149 158.5h5M151.5 156v5M120 177.5h5M122.5 175v5M114 198.5h5M116.5 196v5M123 218.5h5M125.5 216v5M158 230.5h5M160.5 228v5M209 240.5h5M211.5 238v5M252 258.5h5M254.5 256v5M153 281.5h5M155.5 279v5M133 309.5h5M135.5 307v5M128 316.5h5M130.5 314v5M134 321.5h5M136.5 319v5M128 323.5h5M130.5 321v5M76 348.5h5M78.5 346v5M90 362.5h5M92.5 360v5M78 366.5h5M80.5 364v5M73 385.5h5M75.5 383v5M73 390.5h5M75.5 388v5M78 394.5h5M80.5 392v5M98 402.5h5M100.5 400v5M105 404.5h5M107.5 402v5M108 408.5h5M110.5 406v5M116 412.5h5M118.5 410v5M115 420.5h5M117.5 418v5M112 436.5h5M114.5 434v5M154 449.5h5M156.5 447v5M158 454.5h5M160.5 452v5M143 464.5h5M145.5 462v5M200 476.5h5M202.5 474v5M212 478.5h5M214.5 476v5M203 513.5h5M205.5 511v5M198 523.5h5M200.5 521v5M208 528.5h5M210.5 526v5M212 539.5h5M214.5 537v5M226 550.5h5M228.5 548v5M179 560.5h5M181.5 558v5M179 568.5h5M181.5 566v5M171 571.5h5M173.5 569v5M168 573.5h5M170.5 571v5M162 578.5h5M164.5 576v5M140 588.5h5M142.5 586v5M154 591.5h5M156.5 589v5M169 601.5h5M171.5 599v5M165 608.5h5M167.5 606v5M157 635.5h5M159.5 633v5M174 643.5h5M176.5 641v5M126 660.5h5M128.5 658v5M118 664.5h5M120.5 662v5M147 674.5h5M149.5 672v5M125 683.5h5M127.5 681v5M116 686.5h5M118.5 684v5M146 701.5h5M148.5 699v5M114 707.5h5M116.5 705v5M146 712.5h5M148.5 710v5M172 720.5h5M174.5 718v5M188 726.5h5M190.5 724v5M197 724.5h5M199.5 722v5M186 726.5h5M188.5 724v5M204 728.5h5M206.5 726v5M221 730.5h5M223.5 728v5M115 660.5h5M117.5 658v5M159 664.5h5M161.5 662v5M167 665.5h5M169.5 663v5M194 674.5h5M196.5 672v5M225 683.5h5M227.5 681v5M85 686.5h5M87.5 684v5M131 702.5h5M133.5 700v5M144 708.5h5M146.5 706v5M97 712.5h5M99.5 710v5M128 719.5h5M130.5 717v5M144 719.5h5M146.5 717v5M67 730.5h5M69.5 728v5M70 660.5h5M72.5 658v5M73 664.5h5M75.5 662v5M79 674.5h5M81.5 672v5M90 683.5h5M92.5 681v5M116 686.5h5M118.5 684v5M131 701.5h5M133.5 699v5M157 703.5h5M159.5 701v5M197 705.5h5M199.5 703v5M250 707.5h5M252.5 705v5M300 712.5h5M302.5 710v5M321 720.5h5M323.5 718v5M333 720.5h5M335.5 718v5M569 725.5h5M571.5 723v5M317 661.5h5M319.5 659v5M304 665.5h5M306.5 663v5M301 664.5h5M303.5 662v5M284 674.5h5M286.5 672v5M310 687.5h5M312.5 685v5M302 701.5h5M304.5 699v5M297 702.5h5M299.5 700v5M292 703.5h5M294.5 701v5M268 707.5h5M270.5 705v5M232 712.5h5M234.5 710v5M237 719.5h5M239.5 717v5M203 725.5h5M205.5 723v5M211 728.5h5M213.5 726v5M214 730.5h5M216.5 728v5M446 730.5h5M448.5 728v5M480 730.5h5M482.5 728v5M515 730.5h5M517.5 728v5M650 727.5h5M652.5 725v5"/>
<path stroke="#ff0" stroke-width=".99" d="M62.0 644.0L117.6 660.4L161.8 664.2L169.9 665.4L196.6 674.4L227.5 683.3L87.3 687.0L133.3 702.0L146.9 708.4L99.6 712.4L131.0 719.9L146.9 719.9L69.7 730.4"/>
<path stroke="#ff80ff" stroke-width=".99" d="M468.5 50.9L458.5 82.7L448.5 117.8L441.0 150.3L435.2 180.4L431.0 208.0L428.4 236.0L426.6 262.0L426.3 288.1L427.3 313.0L428.4 337.4L430.5 353.2L432.1 365.8L433.8 378.3L435.3 390.0L439.9 405.3L444.6 429.9L450.0 455.6L453.5 474.8L460.3 503.4L467.0 540.1L472.8 576.8L477.0 608.5L478.8 620.0L481.3 651.7M481.3 651.7L463.8 678.1M481.3 651.7L495.6 663.6L503.0 669.2L520.5 683.5L545.4 702.1L566.1 716.2L590.4 731.5"/>
<path stroke="#f0f" stroke-width=".99" d="M437.0 50.9L428.4 82.7L417.2 117.8L408.4 150.3L402.1 175.4L398.6 200.5L394.2 236.0L391.6 262.0L391.3 288.1L391.2 311.0L392.1 326.8L393.2 347.9L394.7 363.7L396.8 379.5L398.7 390.0L402.4 408.8L407.1 428.7L411.8 451.0L416.8 469.7L421.8 487.0L429.0 515.0L436.9 543.4L444.4 570.2L449.4 590.2L453.6 613.5L455.5 624.0L458.2 636.2L461.3 657.3L463.8 678.1M463.8 678.1L434.0 731.0M463.8 678.1L483.1 693.4L508.0 712.1L537.9 731.0"/>
<path stroke="#c8c800" stroke-width=".99" d="M314.4 657.7L319.6 661.1L306.9 665.4L303.8 664.8L286.6 674.4L301.3 683.5L312.5 687.2L305.0 701.5L299.4 702.1L294.5 703.1L270.8 707.2L263.3 708.5L234.1 712.4L239.8 719.8L205.5 725.5L213.6 728.0L216.7 730.4"/>
<path stroke="#e06c00" stroke-width=".99" d="M62.3 644.3L72.7 660.6L75.2 664.8L81.5 674.6L92.1 683.2L109.4 685.2L118.2 686.7L133.2 701.9L159.5 703.2L170.0 703.4L199.2 705.6L241.6 706.8L252.8 707.4L270.6 709.0L302.5 712.5L323.1 720.0L335.5 720.0L359.2 721.1L396.0 721.4L406.0 722.5L454.5 723.3L500.5 723.9L547.8 724.5L571.7 725.9L600.0 726.5L612.0 726.5L613.5 727.5L661.0 727.5"/>
<path stroke="#0f0" stroke-width=".99" d="M187.9 50.9L247.3 82.2L169.6 110.2L205.5 128.3L211.7 147.8L206.0 150.3L175.4 158.4L163.4 177.4L211.2 198.7L277.6 218.7L319.5 231.0L368.3 241.0L397.6 258.0L300.7 281.8L248.0 309.4L217.2 316.9L216.7 321.9L211.7 323.2L217.2 348.7L223.8 349.5L234.8 362.5L229.8 366.3L229.8 385.8L234.8 390.0L241.0 394.6L260.6 403.4L265.6 404.6L265.6 408.9L271.9 412.1L271.9 420.2L265.1 436.7L307.7 449.7L313.2 454.5L301.5 464.7L337.5 476.6L344.5 478.8L313.4 513.9L307.6 523.4L307.6 528.8L301.7 529.5L301.7 539.8L307.6 551.0L289.7 560.5L289.7 569.3L284.2 572.2L277.5 577.7L259.6 586.3L295.9 591.5L307.1 601.5L301.4 608.9L265.6 635.6L265.6 643.6L254.0 660.4L235.3 664.8L229.5 664.2L217.8 674.4L229.5 682.8L241.6 686.8L247.8 701.5L241.6 702.1L235.7 702.8L199.1 707.4L138.1 712.4L122.0 719.9L79.0 725.5L98.3 726.8L84.6 730.4"/>
<path stroke="#ff0080" stroke-width=".99" d="M108.6 50.9L105.6 82.7L129.2 110.3L99.5 128.3L163.6 147.8L164.1 149.8L151.1 158.4L122.0 177.4L116.5 198.7L125.3 218.7L160.4 231.0L211.7 241.0L254.3 258.0L155.9 281.8L135.3 309.4L130.8 316.9L136.0 321.9L130.8 323.2L78.9 348.7L92.0 362.5L80.2 366.3L75.2 385.8L75.2 390.0L80.2 394.6L100.2 402.6L107.7 404.6L111.0 408.4L118.5 412.1L117.8 420.2L114.0 436.7L156.6 449.7L160.4 454.5L145.3 464.8L202.9 477.0L214.6 478.4L205.4 513.9L200.4 523.4L210.9 528.8L214.9 539.3L228.8 550.5L181.5 561.0L181.5 568.8L173.7 571.3L170.3 573.5L164.8 578.5L142.8 588.2L156.7 591.5L171.5 601.9L167.5 608.5L159.3 635.9L176.5 643.3L128.0 660.4L120.5 664.4L149.3 674.4L127.4 683.5L119.0 687.0L148.5 701.8L116.4 707.4L148.7 712.4L174.9 720.0L190.4 726.6L199.9 724.8L189.0 726.9L207.0 729.0L223.5 731.0"/>
<path stroke="#0ff" stroke-width=".99" d="M571.5 18.0L539.9 50.9L509.4 82.2L484.3 110.2L468.3 128.3L449.7 147.8L446.7 149.8L441.5 158.4L428.4 177.4L413.4 198.7L389.6 218.5L422.7 231.0L424.7 241.0L368.3 258.0L378.3 281.8L399.6 309.4L365.0 316.9L393.4 321.9L398.4 323.2L387.9 348.7L405.4 362.5L393.4 366.5L357.7 385.1L401.6 390.6L386.6 394.2L307.0 402.4L411.8 406.7L384.1 409.7L393.7 412.5L326.9 420.7L309.9 436.6L333.9 449.8L350.3 454.5L315.2 464.7L368.7 476.4L344.5 478.8L328.4 513.9L342.6 522.6L394.4 524.2L401.0 528.4L360.1 539.3L392.3 551.0L432.7 561.0L417.7 568.5L434.4 570.2L415.7 572.7L392.3 573.5L365.1 578.8L391.0 587.7L430.2 591.0L432.7 601.9L442.8 608.5L430.6 635.8L441.4 643.3L452.0 660.4L460.5 664.4L459.7 674.4L459.7 683.5L424.4 687.2L438.9 701.8L445.2 707.4L430.2 712.7L438.3 719.9L428.6 725.4L434.6 727.0L442.3 730.1L448.3 731.0"/>
<path stroke="#f00" stroke-width=".99" d="M689.0 68.0L661.5 96.0L647.7 110.2L631.4 128.3L606.8 147.8L604.3 149.8L600.1 158.4L595.8 177.4L587.0 198.7L557.5 218.5L550.5 231.0L532.4 241.0L515.4 258.0L465.3 281.8L445.2 309.4L442.2 316.9L431.7 321.9L428.4 323.2L418.9 348.7L415.9 362.5L415.4 365.8L417.7 385.6L418.3 390.6L418.3 394.4L418.8 402.9L420.0 406.7L420.6 410.0L421.2 412.3L423.5 420.5L428.2 436.6L431.7 449.0L432.3 454.5L433.5 464.7L429.4 476.4L429.4 478.8L437.7 513.9L439.9 523.1L438.6 528.8L437.7 539.8L436.9 551.0L434.4 561.0L434.4 569.6L432.7 572.7L433.6 578.8L432.7 588.5L432.7 591.5L439.4 601.9L443.3 608.5L468.8 635.8L474.2 643.3L489.1 660.4L491.8 664.4L500.5 674.4L511.1 683.5L517.3 687.2L532.9 701.8L531.0 707.4L536.4 712.7L543.5 720.2L537.9 725.8L532.9 726.8L520.5 729.5L498.0 730.6L482.5 730.8L448.3 731.0"/>
<path stroke="#e06c00" d="M61 730.5H661"/>
</g>
<path class="ce" stroke="#fff" d="M61.5 50.5H661.5V749.5H61.5Z"/>
<path class="ce" stroke="#fff" d="M56 50.5H61M56 321.5H61M56 449.5H61M56 529.5H61M56 586.5H61M56 630.5H61M56 665.5H61M56 694.5H61M56 719.5H61M56 740.5H61M662 50.5H667M662 321.5H667M662 449.5H667M662 529.5H667M662 586.5H667M662 630.5H667M662 665.5H667M662 694.5H667M662 719.5H667M61.5 749V755M121.5 749V755M181.5 749V755M241.5 749V755M301.5 749V755M361.5 749V755M421.5 749V755M481.5 749V755M541.5 749V755M601.5 749V755M661.5 749V755"/>
<rect x="311" y="654" width="7" height="7" fill="#c8c800"/>
<text x="314.5" y="660.2" text-anchor="middle" font-size="8" fill="#323200">3</text>
<rect x="298" y="680" width="7" height="7" fill="#c8c800"/>
<text x="301.5" y="686.2" text-anchor="middle" font-size="8" fill="#323200">2</text>
<rect x="260" y="705" width="7" height="7" fill="#c8c800"/>
<text x="263.5" y="711.2" text-anchor="middle" font-size="8" fill="#323200">1</text>
<rect class="ce" x="67.5" y="607.5" width="43" height="17" style="fill:#000" stroke="#ff0"/>
<text x="71.6" y="621" textLength="35.3" lengthAdjust="spacingAndGlyphs" font-size="14" fill="#ff0">CAPE</text>
<rect class="ce" x="67.5" y="636.5" width="57" height="17" style="fill:#000" stroke="#e06c00"/>
<text x="71.5" y="650" textLength="49.5" lengthAdjust="spacingAndGlyphs" font-size="14" fill="#e06c00">CINH * 5</text>
<rect class="ce" x="628.5" y="669.5" width="28" height="17" style="fill:#000" stroke="#f0f"/>
<text x="630" y="683" textLength="22.5" lengthAdjust="spacingAndGlyphs" font-size="14" fill="#f0f">LCL</text>
<g class="ce">
<path stroke="#0f0" d="M761.5 40V770"/>
<path stroke="#ff0080" d="M826.5 40V770"/>
<path stroke="#fff" stroke-width=".99" d="M761.5 82.8L738.2 99.9M761.5 110.4L732.5 114.4M761.5 128.8L733.5 135.7M761.5 147.8L748.3 176.0M761.5 149.8L748.8 177.5M761.5 158.4L747.2 183.5M761.5 177.8L737.3 193.0M761.5 198.6L732.5 201.5M761.5 218.6L738.8 235.4M761.5 231.5L734.6 241.1M761.5 241.5L733.1 249.1M761.5 257.8L741.5 279.3M761.5 258.6L742.0 280.6M761.5 281.6L739.4 300.9M761.5 309.6L742.4 331.3M761.5 316.9L743.6 338.3M761.5 321.9L744.1 345.9M761.5 323.2L744.5 347.4M761.5 348.7L737.7 362.9M761.5 349.6L738.1 364.8M761.5 362.5L737.3 378.9M761.5 366.3L737.7 381.7M761.5 385.8L736.1 399.4M761.5 390.5L735.2 403.2M761.5 394.5L735.2 407.6M761.5 402.5L734.3 414.0M761.5 404.6L734.3 416.1M761.5 406.5L734.2 417.7M761.5 408.5L734.0 419.5M761.5 410.0L733.9 420.6M761.5 412.3L733.0 421.7M761.5 420.5L733.0 429.5M761.5 436.7L733.0 444.4M761.5 449.7L733.0 456.8M761.5 454.5L733.0 462.8M761.5 464.8L737.2 480.7M761.5 476.6L742.1 497.5M761.5 478.5L743.2 500.7M761.5 513.7L746.2 537.5M761.5 523.0L746.2 545.8M761.5 525.5L746.7 549.0M761.5 528.8L748.2 555.1M761.5 539.8L748.4 565.5M761.5 551.0L747.5 577.0M761.5 561.0L745.3 584.8M761.5 569.3L744.9 593.3M761.5 572.2L744.5 595.9M761.5 573.5L744.5 597.2M761.5 578.3L744.2 601.5M761.5 587.8L740.5 608.3M761.5 591.5L740.4 611.7M761.5 601.8L741.3 622.6M761.5 608.5L741.5 630.4M761.5 635.5L744.2 658.5M761.5 643.2L747.5 668.4M761.5 660.5L741.4 680.7M761.5 664.5L741.2 686.6M761.5 674.5L746.2 698.5M761.5 683.5L740.2 703.9M761.5 687.0L740.2 707.4M761.5 701.5L741.5 723.0M761.5 702.2L741.0 723.4M761.5 703.0L740.5 724.0M761.5 707.4L740.0 727.4M761.5 712.4L739.5 730.5M761.5 720.0L744.0 743.7M761.5 725.7L743.3 749.7M761.5 727.0L743.0 749.0M761.5 729.5L742.5 749.5M761.5 732.0L748.4 756.6M761.5 732.0L774.9 757.9M826.5 82.4L825.7 111.9M826.5 110.9L841.5 86.6M826.5 128.8L828.2 98.2M826.5 147.7L849.3 166.7M826.5 149.8L848.2 166.3M826.5 158.3L854.6 167.1M826.5 177.2L854.6 170.5M826.5 198.7L824.0 169.3M826.5 218.6L813.5 244.5M826.5 231.9L798.1 236.5M826.5 241.8L797.0 244.5M826.5 257.8L812.4 283.5M826.5 258.8L813.0 284.8M826.5 281.4L814.5 308.8M826.5 309.8L835.0 337.2M826.5 316.8L847.1 341.4M826.5 321.6L847.8 342.7M826.5 323.2L848.1 344.0M826.5 348.7L846.8 367.7M826.5 349.6L838.3 375.5M826.5 362.9L828.2 392.9M826.5 366.7L830.4 395.3M826.5 385.8L827.0 415.3M826.5 390.5L804.0 408.1M826.5 394.5L799.5 406.5M826.5 402.5L797.5 404.5M826.5 404.6L797.5 406.1M826.5 406.5L797.5 406.5M826.5 408.5L797.5 406.5M826.5 410.0L804.5 406.0M826.5 412.3L797.5 407.3M826.5 420.2L796.9 415.3M826.5 436.5L798.0 428.5M826.5 449.7L796.9 446.4M826.5 454.8L796.9 453.3M826.5 464.5L808.1 486.7M826.5 476.6L817.2 504.6M826.5 478.2L820.3 506.8M826.5 513.4L826.5 542.9M826.5 523.0L829.5 552.3M826.5 528.8L833.7 557.7M826.5 539.8L834.8 567.8M826.5 551.0L835.4 577.8M826.5 561.0L830.5 590.0M826.5 569.3L829.5 598.6M826.5 572.5L828.5 601.9M826.5 578.5L827.5 608.0M826.5 588.0L832.6 614.4M826.5 591.5L819.4 619.4M826.5 601.9L819.4 629.2M826.5 608.5L821.1 638.6M826.5 635.8L834.5 664.2M826.5 643.3L837.8 670.8M826.5 660.4L836.5 688.2M826.5 664.4L838.6 692.2M826.5 674.4L846.8 694.8M826.5 683.5L841.8 708.0M826.5 687.2L834.5 715.2M826.5 701.5L836.5 728.5M826.5 702.3L835.5 729.8M826.5 703.0L834.5 731.0M826.5 707.4L843.5 731.4M826.5 712.4L855.1 705.2M826.5 720.0L855.8 714.7M826.5 725.5L853.9 715.4M826.5 727.0L853.9 717.5M826.5 730.0L853.9 719.9M826.5 731.0L853.5 723.0"/>
</g>
<text x="761" y="32" text-anchor="middle" font-weight="bold" fill="#0f0">OBS</text>
<text x="827" y="32" text-anchor="middle" font-weight="bold" fill="#ff0080">SR</text>
<text x="62" y="29" font-weight="bold" textLength="241" lengthAdjust="spacingAndGlyphs" font-size="16">Station: 06610 Payerne (LSMP)</text>
<text x="329" y="29" font-weight="bold" textLength="129" lengthAdjust="spacingAndGlyphs" font-size="16">Date: 26.06.2025</text>
<text x="479" y="29" font-weight="bold" textLength="92" lengthAdjust="spacingAndGlyphs" font-size="16">Time: 0000Z</text>
<text x="894" y="40" textLength="60" lengthAdjust="spacingAndGlyphs">Parameter</text>
<rect x="894" y="41" width="60" height="1" fill="#fff"/>
<text x="1124" y="40" text-anchor="end" textLength="60" lengthAdjust="spacingAndGlyphs">Value LCL</text>
<rect x="1064" y="41" width="60" height="1" fill="#fff"/>
<text x="1214" y="40" text-anchor="end" textLength="62.3" lengthAdjust="spacingAndGlyphs">Value CCL</text>
<rect x="1152" y="41" width="63" height="1" fill="#fff"/>
<text x="1230" y="40" textLength="23" lengthAdjust="spacingAndGlyphs">Unit</text>
<rect x="1230" y="41" width="24" height="1" fill="#fff"/>
<text x="894" y="104" textLength="258.7" lengthAdjust="spacingAndGlyphs">Parcels: Using 50mB mean layer LCL + CCL</text>
<rect x="894" y="105" width="259" height="1" fill="#fff"/>
<text x="894" y="356" textLength="105.3" lengthAdjust="spacingAndGlyphs">Convective Indices</text>
<rect x="894" y="357" width="106" height="1" fill="#fff"/>
<text x="894" y="605" textLength="100.3" lengthAdjust="spacingAndGlyphs">Wind Parameters</text>
<rect x="894" y="606" width="101" height="1" fill="#fff"/>
<text x="894" y="62" textLength="140.7" lengthAdjust="spacingAndGlyphs">Convective Temperature:</text>
<text x="1124" y="62" text-anchor="end" fill="#f00">36.69</text>
<text x="1230" y="62" textLength="21" lengthAdjust="spacingAndGlyphs">[°C]</text>
<text x="894" y="79" textLength="92" lengthAdjust="spacingAndGlyphs">Snowfall Height:</text>
<text x="1124" y="79" text-anchor="end">3754.96</text>
<text x="1230" y="79" textLength="18" lengthAdjust="spacingAndGlyphs">[m]</text>
<text x="894" y="124" textLength="69.3" lengthAdjust="spacingAndGlyphs">Lifted Index:</text>
<text x="1124" y="124" text-anchor="end" fill="#f00">-2.68</text>
<text x="1214" y="124" text-anchor="end" fill="#f00">-7.01</text>
<text x="1230" y="124" textLength="21" lengthAdjust="spacingAndGlyphs">[°C]</text>
<text x="894" y="141" textLength="61.3" lengthAdjust="spacingAndGlyphs">CAPE ML:</text>
<text x="1124" y="141" text-anchor="end" fill="#ff0">133.44</text>
<text x="1214" y="141" text-anchor="end" fill="#f00">1214.85</text>
<text x="1230" y="141" textLength="31.3" lengthAdjust="spacingAndGlyphs">[J/kg]</text>
<text x="894" y="158" textLength="174.3" lengthAdjust="spacingAndGlyphs">CINH | LSI (Inversion: 904mB):</text>
<text x="1124" y="158" text-anchor="end" fill="#0f0">630.23</text>
<text x="1124" y="158">,</text>
<text x="1136" y="158" fill="#0f0">16.29</text>
<text x="1230" y="158" textLength="61" lengthAdjust="spacingAndGlyphs">[J/kg], [°C]</text>
<text x="894" y="175" textLength="69.3" lengthAdjust="spacingAndGlyphs">CAPE SFC:</text>
<text x="1124" y="175" text-anchor="end" fill="#0f0">0.00</text>
<text x="1214" y="175" text-anchor="end" fill="#f00">1856.04</text>
<text x="1230" y="175" textLength="31.3" lengthAdjust="spacingAndGlyphs">[J/kg]</text>
<text x="894" y="192" textLength="128" lengthAdjust="spacingAndGlyphs">CAPE MU | CINH MU:</text>
<text x="1124" y="192" text-anchor="end" fill="#f00">819.00</text>
<text x="1124" y="192">,</text>
<text x="1136" y="192" fill="#f00">30.64</text>
<text x="1230" y="192" textLength="31.3" lengthAdjust="spacingAndGlyphs">[J/kg]</text>
<text x="894" y="209" textLength="159" lengthAdjust="spacingAndGlyphs">3km SFC CAPE | IL CAPE:</text>
<text x="1124" y="209" text-anchor="end" fill="#0f0">0.00</text>
<text x="1124" y="209">,</text>
<text x="1136" y="209" fill="#f00">1182.33</text>
<text x="1230" y="209" textLength="31.3" lengthAdjust="spacingAndGlyphs">[J/kg]</text>
<text x="894" y="226" textLength="141.7" lengthAdjust="spacingAndGlyphs">DCAPE (LFS = 510mB):</text>
<text x="1124" y="226" text-anchor="end" fill="#f00">1015.06</text>
<text x="1230" y="226" textLength="31.3" lengthAdjust="spacingAndGlyphs">[J/kg]</text>
<text x="894" y="243" textLength="119.3" lengthAdjust="spacingAndGlyphs">850-600 Lapse Rate:</text>
<text x="1124" y="243" text-anchor="end" fill="#f00">24.15</text>
<text x="1230" y="243" textLength="21" lengthAdjust="spacingAndGlyphs">[°C]</text>
<text x="894" y="260" textLength="155.3" lengthAdjust="spacingAndGlyphs">FM Hail Size | SHIP | LHP:</text>
<text x="1124" y="260" text-anchor="end" fill="#ff0">0.6 - 1.3</text>
<text x="1124" y="260">,</text>
<text x="1136" y="260" fill="#0f0">0.67</text>
<text x="1161" y="260">,</text>
<text x="1173" y="260" fill="#ff0">4.84</text>
<text x="1230" y="260" textLength="71" lengthAdjust="spacingAndGlyphs">[cm], [1], [1]</text>
<text x="894" y="277" textLength="146.3" lengthAdjust="spacingAndGlyphs">Estofex Exp. Hail Param:</text>
<text x="1124" y="277" text-anchor="end" fill="#f00">6.84</text>
<text x="1230" y="277" textLength="25" lengthAdjust="spacingAndGlyphs">[cm]</text>
<text x="894" y="294" textLength="172.3" lengthAdjust="spacingAndGlyphs">Max. Hail Size (OLD, MU, IL):</text>
<text x="1124" y="294" text-anchor="end" fill="#f00">5.17</text>
<text x="1124" y="294">,</text>
<text x="1136" y="294" fill="#f00">3.26</text>
<text x="1161" y="294">,</text>
<text x="1173" y="294" fill="#f00">3.89</text>
<text x="1230" y="294" textLength="25" lengthAdjust="spacingAndGlyphs">[cm]</text>
<text x="894" y="314" textLength="101.3" lengthAdjust="spacingAndGlyphs">LCL / CCL (AGL):</text>
<text x="1124" y="314" text-anchor="end" fill="#0f0">2206.89</text>
<text x="1214" y="314" text-anchor="end" fill="#0f0">3219.78</text>
<text x="1230" y="314" textLength="18" lengthAdjust="spacingAndGlyphs">[m]</text>
<text x="894" y="331" textLength="105.3" lengthAdjust="spacingAndGlyphs">Convective Height:</text>
<text x="1124" y="331" text-anchor="end" fill="#ff0">4.41</text>
<text x="1214" y="331" text-anchor="end" fill="#f00">8.41</text>
<text x="1230" y="331" textLength="25" lengthAdjust="spacingAndGlyphs">[km]</text>
<text x="894" y="376" textLength="95.3" lengthAdjust="spacingAndGlyphs">Showalter Index:</text>
<text x="1124" y="376" text-anchor="end" fill="#f00">-4.84</text>
<text x="1230" y="376" textLength="21" lengthAdjust="spacingAndGlyphs">[°C]</text>
<text x="894" y="393" textLength="150.3" lengthAdjust="spacingAndGlyphs">Modified Thompson Index:</text>
<text x="1124" y="393" text-anchor="end" fill="#f00">45.75</text>
<text x="1230" y="393" textLength="21" lengthAdjust="spacingAndGlyphs">[°C]</text>
<text x="894" y="410" textLength="105.3" lengthAdjust="spacingAndGlyphs">Total Totals Index:</text>
<text x="1124" y="410" text-anchor="end" fill="#f00">58.70</text>
<text x="1230" y="410" textLength="21" lengthAdjust="spacingAndGlyphs">[°C]</text>
<text x="894" y="427" textLength="57.3" lengthAdjust="spacingAndGlyphs">KO Index:</text>
<text x="1124" y="427" text-anchor="end" fill="#ff0">-4.21</text>
<text x="1230" y="427" textLength="14.3" lengthAdjust="spacingAndGlyphs">[1]</text>
<text x="894" y="444" textLength="123.3" lengthAdjust="spacingAndGlyphs">Craven SigSvr / 1000:</text>
<text x="1124" y="444" text-anchor="end" fill="#ff0">2.51</text>
<text x="1230" y="444" textLength="53" lengthAdjust="spacingAndGlyphs">[m^3/s^3]</text>
<text x="894" y="461" textLength="114.3" lengthAdjust="spacingAndGlyphs">SCP RM (new, old):</text>
<text x="1124" y="461" text-anchor="end" fill="#0f0">0.00</text>
<text x="1124" y="461">,</text>
<text x="1136" y="461" fill="#f00">0.93</text>
<text x="1230" y="461" textLength="14.3" lengthAdjust="spacingAndGlyphs">[1]</text>
<text x="894" y="478" textLength="88.3" lengthAdjust="spacingAndGlyphs">STP (new, old):</text>
<text x="1124" y="478" text-anchor="end" fill="#0f0">0.00</text>
<text x="1124" y="478">,</text>
<text x="1136" y="478" fill="#0f0">0.00</text>
<text x="1230" y="478" textLength="14.3" lengthAdjust="spacingAndGlyphs">[1]</text>
<text x="894" y="495" textLength="135.3" lengthAdjust="spacingAndGlyphs">SB STP (fix) | CWASP:</text>
<text x="1124" y="495" text-anchor="end" fill="#0f0">0.00</text>
<text x="1124" y="495">,</text>
<text x="1136" y="495" fill="#0f0">44.44</text>
<text x="1230" y="495" textLength="42.3" lengthAdjust="spacingAndGlyphs">[1], [%]</text>
<text x="894" y="512" textLength="112.3" lengthAdjust="spacingAndGlyphs">DCP | MMP | MSP:</text>
<text x="1124" y="512" text-anchor="end" fill="#f00">1.35</text>
<text x="1124" y="512">,</text>
<text x="1136" y="512" fill="#f00">75.24</text>
<text x="1168" y="512">,</text>
<text x="1180" y="512" fill="#0f0">57.92</text>
<text x="1230" y="512" textLength="70" lengthAdjust="spacingAndGlyphs">[1], [%], [%]</text>
<text x="894" y="529" textLength="126.3" lengthAdjust="spacingAndGlyphs">MB Comp | SHERBE:</text>
<text x="1124" y="529" text-anchor="end" fill="#0f0">0.00</text>
<text x="1124" y="529">,</text>
<text x="1136" y="529" fill="#0f0">0.22</text>
<text x="1230" y="529" textLength="37" lengthAdjust="spacingAndGlyphs">[1], [1]</text>
<text x="894" y="546" textLength="145.3" lengthAdjust="spacingAndGlyphs">Exp. Supercell Index CH:</text>
<text x="1124" y="546" text-anchor="end" fill="#f00">3.31</text>
<text x="1230" y="546" textLength="14.3" lengthAdjust="spacingAndGlyphs">[1]</text>
<text x="894" y="563" textLength="99.3" lengthAdjust="spacingAndGlyphs">SWISS 12 Index:</text>
<text x="1124" y="563" text-anchor="end" fill="#f00">-7.18</text>
<text x="1230" y="563" textLength="14.3" lengthAdjust="spacingAndGlyphs">[1]</text>
<text x="894" y="580" textLength="110.3" lengthAdjust="spacingAndGlyphs">Precipitable Water:</text>
<text x="1124" y="580" text-anchor="end" fill="#f00">30.16</text>
<text x="1230" y="580" textLength="29" lengthAdjust="spacingAndGlyphs">[mm]</text>
<text x="894" y="625" textLength="143.3" lengthAdjust="spacingAndGlyphs">Storm Direction | Motion:</text>
<text x="1124" y="625" text-anchor="end">244.16</text>
<text x="1124" y="625">,</text>
<text x="1136" y="625" fill="#f00">26.80</text>
<text x="1230" y="625" textLength="46" lengthAdjust="spacingAndGlyphs">[°], [knt]</text>
<text x="894" y="642" textLength="116.3" lengthAdjust="spacingAndGlyphs">500m Critical Angle:</text>
<text x="1124" y="642" text-anchor="end" fill="#0f0">19.44</text>
<text x="1230" y="642" textLength="12" lengthAdjust="spacingAndGlyphs">[°]</text>
<text x="894" y="662" textLength="107.3" lengthAdjust="spacingAndGlyphs">SR Wind Sfc-2km:</text>
<text x="1124" y="662" text-anchor="end" fill="#ff0">12.25</text>
<text x="1230" y="662" textLength="25" lengthAdjust="spacingAndGlyphs">[knt]</text>
<text x="894" y="679" textLength="113.3" lengthAdjust="spacingAndGlyphs">SR Wind 4km-6km:</text>
<text x="1124" y="679" text-anchor="end" fill="#f00">16.81</text>
<text x="1230" y="679" textLength="25" lengthAdjust="spacingAndGlyphs">[knt]</text>
<text x="894" y="696" textLength="120.3" lengthAdjust="spacingAndGlyphs">SR Wind 9km-11km:</text>
<text x="1124" y="696" text-anchor="end" fill="#f00">6.66</text>
<text x="1230" y="696" textLength="47.3" lengthAdjust="spacingAndGlyphs">[knt] HP</text>
<text x="894" y="716" textLength="121.3" lengthAdjust="spacingAndGlyphs">Effective Shear 6000:</text>
<text x="1124" y="716" text-anchor="end" fill="#f00">34.58</text>
<text x="1230" y="716" textLength="25" lengthAdjust="spacingAndGlyphs">[knt]</text>
<text x="894" y="736" textLength="147.3" lengthAdjust="spacingAndGlyphs">Bulk Richardson Number:</text>
<text x="1124" y="736" text-anchor="end" fill="#ff0">2.03</text>
<text x="1214" y="736" text-anchor="end" fill="#f00">18.50</text>
<text x="1230" y="736" textLength="14.3" lengthAdjust="spacingAndGlyphs">[1]</text>
<text x="894" y="756" textLength="111.3" lengthAdjust="spacingAndGlyphs">3km Effective SRH:</text>
<text x="1124" y="756" text-anchor="end" fill="#0f0">65.15</text>
<text x="1230" y="756" textLength="53" lengthAdjust="spacingAndGlyphs">[m^2/s^2]</text>
<text x="894" y="773" textLength="173.3" lengthAdjust="spacingAndGlyphs">Max 3km SRH (0-2km) | AGL:</text>
<text x="1124" y="773" text-anchor="end" fill="#f00">107.31</text>
<text x="1124" y="773">,</text>
<text x="1136" y="773" fill="#0f0">1280.00</text>
<text x="1230" y="773" textLength="80" lengthAdjust="spacingAndGlyphs">[m^2/s^2], [m]</text>
<text x="894" y="793" textLength="155.3" lengthAdjust="spacingAndGlyphs">3km Energy Helicity Index:</text>
<text x="1124" y="793" text-anchor="end" fill="#0f0">0.06</text>
<text x="1214" y="793" text-anchor="end" fill="#0f0">0.52</text>
<text x="1230" y="793" textLength="14.3" lengthAdjust="spacingAndGlyphs">[1]</text>
<text x="894" y="810" textLength="140.3" lengthAdjust="spacingAndGlyphs">3km Vorticity Gen. Pot.:</text>
<text x="1124" y="810" text-anchor="end" fill="#0f0">0.06</text>
<text x="1214" y="810" text-anchor="end" fill="#f00">0.19</text>
<text x="1230" y="810" textLength="41" lengthAdjust="spacingAndGlyphs">[m/s^2]</text>
<rect x="729" y="827" width="15" height="8" fill="#f00"/>
<text x="753" y="835.6" textLength="111.7" lengthAdjust="spacingAndGlyphs" fill="#f00">Temperature Profile</text>
<rect x="729" y="847" width="15" height="8" fill="#0ff"/>
<text x="753" y="855.6" textLength="92.2" lengthAdjust="spacingAndGlyphs" fill="#0ff">Dewpoint Profile</text>
<rect x="729" y="867" width="15" height="8" fill="#0f0"/>
<text x="753" y="875.6" textLength="136.2" lengthAdjust="spacingAndGlyphs" fill="#0f0">OBS Windspeed Profile</text>
<rect x="729" y="887" width="15" height="8" fill="#ff0080"/>
<text x="753" y="895.6" textLength="126.7" lengthAdjust="spacingAndGlyphs" fill="#ff0080">SR Windspeed Profile</text>
<rect x="729" y="907" width="15" height="8" fill="#c8c800"/>
<text x="753" y="915.6" textLength="222.3" lengthAdjust="spacingAndGlyphs" fill="#c8c800">Sfc-3km Storm Relative Helicity Profile</text>
<rect x="729" y="927" width="15" height="8" fill="#3c3c00"/>
<text x="753" y="935.6" textLength="204.8" lengthAdjust="spacingAndGlyphs" fill="#3c3c00">Effective Layer (CAPE &gt;= 100 J/kg)</text>
<rect x="1079" y="827" width="15" height="8" fill="#0f0"/>
<text x="1103" y="835.6" textLength="182.7" lengthAdjust="spacingAndGlyphs" fill="#0f0">No / Non Severe Thunderstorms</text>
<rect x="1079" y="847" width="15" height="8" fill="#ff0"/>
<text x="1103" y="855.6" textLength="211" lengthAdjust="spacingAndGlyphs" fill="#ff0">Scattered / Moderate Thunderstorms</text>
<rect x="1079" y="867" width="15" height="8" fill="#f00"/>
<text x="1103" y="875.6" textLength="209" lengthAdjust="spacingAndGlyphs" fill="#f00">Widespread / Severe Thunderstorms</text>
<g font-family="'DejaVu Sans Condensed', 'DejaVu Sans', 'Liberation Sans', sans-serif" font-size="12" stroke="#fff" stroke-width=".12">
<text x="53" y="55" text-anchor="end">100</text>
<text x="53" y="326" text-anchor="end">200</text>
<text x="53" y="454" text-anchor="end">300</text>
<text x="53" y="534" text-anchor="end">400</text>
<text x="53" y="591" text-anchor="end">500</text>
<text x="53" y="635" text-anchor="end">600</text>
<text x="53" y="670" text-anchor="end">700</text>
<text x="53" y="699" text-anchor="end">800</text>
<text x="53" y="724" text-anchor="end">900</text>
<text x="53" y="745" text-anchor="end">1000</text>
<text x="670" y="55" textLength="45.5" lengthAdjust="spacingAndGlyphs">16634m</text>
<text x="670" y="326" textLength="45.5" lengthAdjust="spacingAndGlyphs">12239m</text>
<text x="670" y="454" textLength="38.3" lengthAdjust="spacingAndGlyphs">9577m</text>
<text x="670" y="534" textLength="38.3" lengthAdjust="spacingAndGlyphs">7526m</text>
<text x="670" y="591" textLength="38.3" lengthAdjust="spacingAndGlyphs">5858m</text>
<text x="670" y="635" textLength="38.3" lengthAdjust="spacingAndGlyphs">4438m</text>
<text x="670" y="670" textLength="38.3" lengthAdjust="spacingAndGlyphs">3185m</text>
<text x="670" y="699" textLength="38.3" lengthAdjust="spacingAndGlyphs">2055m</text>
<text x="670" y="724" textLength="38.3" lengthAdjust="spacingAndGlyphs">1030m</text>
<text x="58.5" y="768" text-anchor="middle">-50</text>
<text x="61.5" y="806" text-anchor="middle">0</text>
<text x="61.5" y="843" text-anchor="middle">0</text>
<text x="118.5" y="768" text-anchor="middle">-40</text>
<text x="121.5" y="806" text-anchor="middle">10</text>
<text x="121.5" y="843" text-anchor="middle">300</text>
<text x="178.5" y="768" text-anchor="middle">-30</text>
<text x="181.5" y="806" text-anchor="middle">20</text>
<text x="181.5" y="843" text-anchor="middle">600</text>
<text x="238.5" y="768" text-anchor="middle">-20</text>
<text x="241.5" y="806" text-anchor="middle">30</text>
<text x="241.5" y="843" text-anchor="middle">900</text>
<text x="298.5" y="768" text-anchor="middle">-10</text>
<text x="301.5" y="806" text-anchor="middle">40</text>
<text x="301.5" y="843" text-anchor="middle">1200</text>
<text x="361.5" y="768" text-anchor="middle">0</text>
<text x="361.5" y="806" text-anchor="middle">50</text>
<text x="361.5" y="843" text-anchor="middle">1500</text>
<text x="421.5" y="768" text-anchor="middle">10</text>
<text x="421.5" y="806" text-anchor="middle">60</text>
<text x="421.5" y="843" text-anchor="middle">1800</text>
<text x="481.5" y="768" text-anchor="middle">20</text>
<text x="481.5" y="806" text-anchor="middle">70</text>
<text x="481.5" y="843" text-anchor="middle">2100</text>
<text x="541.5" y="768" text-anchor="middle">30</text>
<text x="541.5" y="806" text-anchor="middle">80</text>
<text x="541.5" y="843" text-anchor="middle">2400</text>
<text x="601.5" y="768" text-anchor="middle">40</text>
<text x="601.5" y="806" text-anchor="middle">90</text>
<text x="601.5" y="843" text-anchor="middle">2700</text>
<text x="661.5" y="768" text-anchor="middle">50</text>
<text x="661.5" y="806" text-anchor="middle">100</text>
<text x="661.5" y="843" text-anchor="middle">3000</text>
<text x="58.5" y="880" text-anchor="middle">-100</text>
<text x="133.5" y="880" text-anchor="middle">-50</text>
<text x="211.5" y="880" text-anchor="middle">0</text>
<text x="286.5" y="880" text-anchor="middle">50</text>
<text x="361.5" y="880" text-anchor="middle">100</text>
<text x="436.5" y="880" text-anchor="middle">150</text>
<text x="511.5" y="880" text-anchor="middle">200</text>
<text x="586.5" y="880" text-anchor="middle">250</text>
<text x="661.5" y="880" text-anchor="middle">300</text>
<text x="361" y="781" text-anchor="middle" textLength="175" lengthAdjust="spacingAndGlyphs">Temperature, Dewpoint  [ °C ]</text>
<text x="361" y="819" text-anchor="middle" textLength="105.5" lengthAdjust="spacingAndGlyphs">Windspeed  [ knt ]</text>
<text x="361" y="857" text-anchor="middle" textLength="137.5" lengthAdjust="spacingAndGlyphs">CAPE, CINH * 5  [ J/kg ]</text>
<text x="361" y="893" text-anchor="middle" textLength="207.5" lengthAdjust="spacingAndGlyphs">Storm Relative Helicity  [ m^2/s^2 ]</text>
</g>
<path class="ce" stroke="#fff" d="M61.5 788v5M61.5 826v5M121.5 788v5M121.5 826v5M181.5 788v5M181.5 826v5M241.5 788v5M241.5 826v5M301.5 788v5M301.5 826v5M361.5 788v5M361.5 826v5M421.5 788v5M421.5 826v5M481.5 788v5M481.5 826v5M541.5 788v5M541.5 826v5M601.5 788v5M601.5 826v5M661.5 788v5M661.5 826v5M61.5 863v5M136.5 863v5M211.5 863v5M286.5 863v5M361.5 863v5M436.5 863v5M511.5 863v5M586.5 863v5M661.5 863v5"/>
</svg></body></html>
